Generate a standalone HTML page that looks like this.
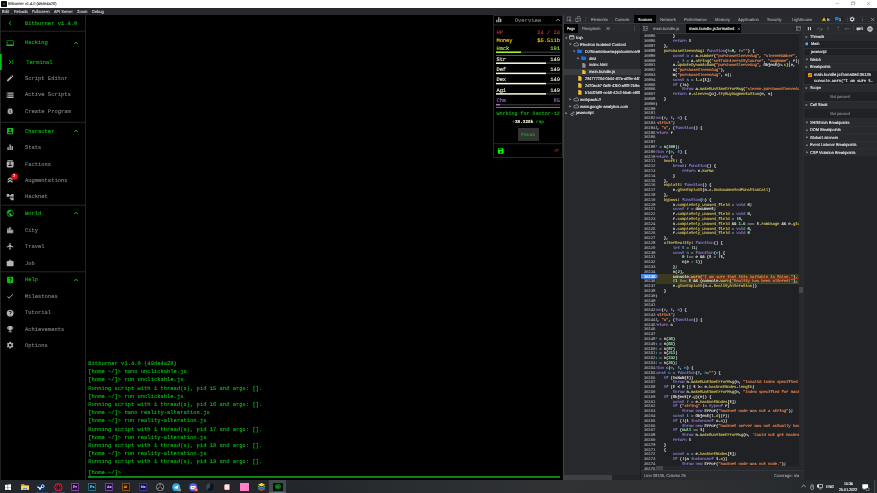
<!DOCTYPE html>
<html lang="en"><head><meta charset="utf-8"><title>Bitburner v1.4.0 (49de4a28)</title>
<style>
html,body{margin:0;padding:0;background:#000;overflow:hidden}
#root{will-change:transform;text-rendering:geometricPrecision;position:relative;width:877px;height:493px;overflow:hidden;background:#000;font-family:"Liberation Sans","DejaVu Sans",sans-serif}
#root div,#root svg{position:absolute;box-sizing:border-box}
#root .t{white-space:pre;line-height:8px}
#root span{white-space:pre}
.m{font-family:"Liberation Mono","DejaVu Sans Mono",monospace;-webkit-text-stroke:0.1px}
.s{font-family:"Liberation Sans","DejaVu Sans",sans-serif;-webkit-text-stroke:0.11px}
.b{font-weight:bold}
.i{font-style:italic}

</style></head><body><div id="root">
<div style="left:0px;top:0px;width:877px;height:8px;background:#ffffff;"></div>
<div style="left:1.3px;top:1.3px;width:5.3px;height:5.4px;background:#0c100c;border-radius:0.4px"></div>
<div style="left:2.6px;top:2.8px;width:2.8px;height:2.6px;background:#0a5a0a;"></div>
<div class="t s" style="left:8.3px;top:0px;font-size:4.0px;color:#3a3a3a;transform:scaleX(0.9737);transform-origin:0 50%;">Bitburner v1.4.0 (49de4a28)</div>
<svg style="left:834px;top:0px;" width="40" height="8" viewBox="0 0 40 8"><path d="M1.7 3.6h3.4" stroke="#777" stroke-width=".4" fill="none"/><rect x="17.6" y="2.3" width="2.6" height="2.6" stroke="#777" stroke-width=".4" fill="none"/><path d="M18.3 2.3v-.6h2.6v2.6h-.7" stroke="#777" stroke-width=".35" fill="none"/><path d="M33 2l3.2 3.2M36.2 2L33 5.2" stroke="#666" stroke-width=".45" fill="none"/></svg>
<div style="left:0px;top:8px;width:877px;height:6.6px;background:#28292c;"></div>
<div class="t s" style="left:1.9px;top:8px;font-size:4.3px;color:#d8d8d8;transform:scaleX(0.9582);transform-origin:0 50%;">Edit</div>
<div class="t s" style="left:13.6px;top:8px;font-size:4.3px;color:#d8d8d8;transform:scaleX(0.8747);transform-origin:0 50%;">Reloads</div>
<div class="t s" style="left:32px;top:8px;font-size:4.3px;color:#d8d8d8;transform:scaleX(0.8923);transform-origin:0 50%;">Fullscreen</div>
<div class="t s" style="left:54px;top:8px;font-size:4.3px;color:#d8d8d8;transform:scaleX(0.8994);transform-origin:0 50%;">API Server</div>
<div class="t s" style="left:77px;top:8px;font-size:4.3px;color:#d8d8d8;transform:scaleX(0.9462);transform-origin:0 50%;">Zoom</div>
<div class="t s" style="left:92px;top:8px;font-size:4.3px;color:#d8d8d8;transform:scaleX(0.9312);transform-origin:0 50%;">Debug</div>
<div style="left:0px;top:14.6px;width:563.0px;height:465.2px;background:#000;"></div>
<div style="left:0px;top:14.6px;width:1px;height:465.2px;background:#222222;"></div>
<div style="left:85px;top:14.6px;width:1px;height:465.2px;background:#222222;"></div>
<svg style="left:5.65px;top:18.85px;" width="8.3" height="8.3" viewBox="0 0 24 24"><path d="M15.41 7.41L14 6l-6 6 6 6 1.41-1.41L10.830 12z" fill="#0cc016"/></svg>
<div class="t m" style="left:24.9px;top:20px;font-size:5.48px;color:#0cc016;">Bitburner v1.4.0</div>
<div style="left:0px;top:30px;width:85px;height:1px;background:rgba(38,38,38,0.30);"></div>
<div style="left:0px;top:31px;width:85px;height:1px;background:rgba(38,38,38,0.70);"></div>
<div style="left:0px;top:121px;width:85px;height:1px;background:rgba(38,38,38,0.30);"></div>
<div style="left:0px;top:122px;width:85px;height:1px;background:rgba(38,38,38,0.70);"></div>
<div style="left:0px;top:204px;width:85px;height:1px;background:rgba(38,38,38,0.30);"></div>
<div style="left:0px;top:205px;width:85px;height:1px;background:rgba(38,38,38,0.70);"></div>
<div style="left:0px;top:271px;width:85px;height:1px;background:rgba(38,38,38,0.70);"></div>
<div style="left:0px;top:272px;width:85px;height:1px;background:rgba(38,38,38,0.30);"></div>
<svg style="left:5.85px;top:38.65px;" width="8.3" height="8.3" viewBox="0 0 24 24"><path d="M20 18c1.1 0 1.99-.9 1.99-2L22 6c0-1.1-.9-2-2-2H4c-1.1 0-2 .9-2 2v10c0 1.1.9 2 2 2H0v2h24v-2h-4zM4 6h16v10H4V6z" fill="#0cc016"/></svg>
<div class="t m" style="left:24.9px;top:39px;font-size:5.48px;color:#0cc016;">Hacking</div>
<svg style="left:71.85px;top:38.65px;" width="8.3" height="8.3" viewBox="0 0 24 24"><path d="M12 8l-6 6 1.41 1.41L12 10.83l4.59 4.58L18 14z" fill="#0cc016"/></svg>
<div style="left:0px;top:54px;width:1px;height:16px;background:rgba(12,192,22,1.00);"></div>
<div style="left:1px;top:54px;width:1px;height:16px;background:rgba(12,192,22,0.75);"></div>
<svg style="left:7.05px;top:57.85px;" width="8.3" height="8.3" viewBox="0 0 24 24"><path d="M5.59 7.41L10.18 12l-4.59 4.59L7 18l6-6-6-6zM16 6h2v12h-2z" fill="#0cc016"/></svg>
<div class="t m" style="left:26.3px;top:59px;font-size:5.48px;color:#0cc016;">Terminal</div>
<svg style="left:5.85px;top:74.25px;" width="8.3" height="8.3" viewBox="0 0 24 24"><path d="M3 17.25V21h3.75L17.81 9.94l-3.75-3.75L3 17.25zM20.71 7.04c.39-.39.39-1.02 0-1.41l-2.34-2.34c-.39-.39-1.02-.39-1.41 0l-1.83 1.83 3.75 3.75 1.83-1.83z" fill="#b4b4b4"/></svg>
<div class="t m" style="left:24.9px;top:75px;font-size:5.48px;color:#828282;">Script Editor</div>
<svg style="left:5.85px;top:90.65px;" width="8.3" height="8.3" viewBox="0 0 24 24"><path d="M2 20h20v-4H2v4zm2-3h2v2H4v-2zM2 4v4h20V4H2zm4 3H4V5h2v2zm-4 7h20v-4H2v4zm2-3h2v2H4v-2z" fill="#b4b4b4"/></svg>
<div class="t m" style="left:24.9px;top:91px;font-size:5.48px;color:#828282;">Active Scripts</div>
<svg style="left:5.85px;top:107.15px;" width="8.3" height="8.3" viewBox="0 0 24 24"><path d="M20 8h-2.81c-.45-.78-1.07-1.45-1.82-1.96L17 4.41 15.59 3l-2.17 2.17C12.96 5.06 12.49 5 12 5c-.49 0-.96.06-1.41.17L8.41 3 7 4.41l1.62 1.63C7.88 6.55 7.26 7.22 6.81 8H4v2h2.09c-.05.33-.09.66-.09 1v1H4v2h2v1c0 .34.04.67.09 1H4v2h2.81c1.04 1.79 2.97 3 5.19 3s4.15-1.21 5.19-3H20v-2h-2.09c.05-.33.09-.66.09-1v-1h2v-2h-2v-1c0-.34-.04-.67-.09-1H20V8zm-6 8h-4v-2h4v2zm0-4h-4v-2h4v2z" fill="#b4b4b4"/></svg>
<div class="t m" style="left:24.9px;top:108px;font-size:5.48px;color:#828282;">Create Program</div>
<svg style="left:5.85px;top:126.85px;" width="8.3" height="8.3" viewBox="0 0 24 24"><path d="M3 5v14c0 1.1.89 2 2 2h14c1.1 0 2-.9 2-2V5c0-1.1-.9-2-2-2H5c-1.11 0-2 .9-2 2zm12 4c0 1.66-1.34 3-3 3s-3-1.34-3-3 1.34-3 3-3 3 1.34 3 3zm-9 8c0-2 4-3.1 6-3.1s6 1.1 6 3.1v1H6v-1z" fill="#0cc016"/></svg>
<div class="t m" style="left:24.9px;top:128px;font-size:5.48px;color:#0cc016;">Character</div>
<svg style="left:71.85px;top:126.85px;" width="8.3" height="8.3" viewBox="0 0 24 24"><path d="M12 8l-6 6 1.41 1.41L12 10.83l4.59 4.58L18 14z" fill="#0cc016"/></svg>
<svg style="left:5.85px;top:143.35px;" width="8.3" height="8.3" viewBox="0 0 24 24"><path d="M10 20h4V4h-4v16zm-6 0h4v-8H4v8zM16 9v11h4V9h-4z" fill="#b4b4b4"/></svg>
<div class="t m" style="left:24.9px;top:144px;font-size:5.48px;color:#828282;">Stats</div>
<svg style="left:5.85px;top:159.75px;" width="8.3" height="8.3" viewBox="0 0 24 24"><path d="M20 0H4v2h16V0zM4 24h16v-2H4v2zM20 4H4c-1.1 0-2 .9-2 2v12c0 1.1.9 2 2 2h16c1.1 0 2-.9 2-2V6c0-1.1-.9-2-2-2zm-8 2.75c1.24 0 2.25 1.01 2.25 2.25s-1.01 2.25-2.25 2.25S9.75 10.24 9.75 9 10.76 6.75 12 6.75zM17 17H7v-1.5c0-1.67 3.33-2.5 5-2.5s5 .83 5 2.5V17z" fill="#b4b4b4"/></svg>
<div class="t m" style="left:24.9px;top:161px;font-size:5.48px;color:#828282;">Factions</div>
<svg style="left:5.85px;top:176.25px;" width="8.3" height="8.3" viewBox="0 0 24 24"><path d="M5 8.5V13l7-5 7 5V8.5l-7-5zM5 15.5V20l7-5 7 5v-4.500l-7-5z" fill="#b4b4b4"/></svg>
<div class="t m" style="left:24.9px;top:177px;font-size:5.48px;color:#828282;">Augmentations</div>
<svg style="left:5.85px;top:192.65px;" width="8.3" height="8.3" viewBox="0 0 24 24"><path d="M22 11V3h-7v3H9V3H2v8h7V8h2v10h4v3h7v-8h-7v3h-2V8h2v3z" fill="#b4b4b4"/></svg>
<div class="t m" style="left:24.9px;top:193px;font-size:5.48px;color:#828282;">Hacknet</div>
<svg style="left:5.85px;top:209.35px;" width="8.3" height="8.3" viewBox="0 0 24 24"><path d="M12 2C6.48 2 2 6.48 2 12s4.48 10 10 10 10-4.48 10-10S17.52 2 12 2zm-1 17.93c-3.95-.49-7-3.85-7-7.93 0-.62.08-1.21.21-1.79L9 15v1c0 1.1.9 2 2 2v1.93zm6.9-2.54c-.26-.81-1-1.39-1.9-1.39h-1v-3c0-.55-.45-1-1-1H8v-2h2c.55 0 1-.45 1-1V7h2c1.1 0 2-.9 2-2v-.41c2.93 1.19 5 4.06 5 7.41 0 2.08-.8 3.97-2.1 5.39z" fill="#0cc016"/></svg>
<div class="t m" style="left:24.9px;top:210px;font-size:5.48px;color:#0cc016;">World</div>
<svg style="left:71.85px;top:209.35px;" width="8.3" height="8.3" viewBox="0 0 24 24"><path d="M12 8l-6 6 1.41 1.41L12 10.83l4.59 4.58L18 14z" fill="#0cc016"/></svg>
<svg style="left:5.85px;top:225.95px;" width="8.3" height="8.3" viewBox="0 0 24 24"><path d="M15 11V5l-3-3-3 3v2H3v14h18V11h-6zm-8 8H5v-2h2v2zm0-4H5v-2h2v2zm0-4H5V9h2v2zm6 8h-2v-2h2v2zm0-4h-2v-2h2v2zm0-4h-2V9h2v2zm0-4h-2V5h2v2zm6 12h-2v-2h2v2zm0-4h-2v-2h2v2z" fill="#b4b4b4"/></svg>
<div class="t m" style="left:24.9px;top:227px;font-size:5.48px;color:#828282;">City</div>
<svg style="left:5.85px;top:242.45px;" width="8.3" height="8.3" viewBox="0 0 24 24"><path d="M21 16v-2l-8-5V3.5c0-.83-.67-1.5-1.5-1.5S10 2.67 10 3.5V9l-8 5v2l8-2.5V19l-2 1.5V22l3.5-1 3.5 1v-1.5L13 19v-5.5l8 2.5z" fill="#b4b4b4"/></svg>
<div class="t m" style="left:24.9px;top:243px;font-size:5.48px;color:#828282;">Travel</div>
<svg style="left:5.85px;top:258.85px;" width="8.3" height="8.3" viewBox="0 0 24 24"><path d="M20 6h-4V4c0-1.11-.89-2-2-2h-4c-1.11 0-2 .89-2 2v2H4c-1.11 0-1.99.89-1.99 2L2 19c0 1.11.89 2 2 2h16c1.11 0 2-.89 2-2V8c0-1.11-.89-2-2-2zm-6 0h-4V4h4v2z" fill="#b4b4b4"/></svg>
<div class="t m" style="left:24.9px;top:260px;font-size:5.48px;color:#828282;">Job</div>
<svg style="left:5.85px;top:275.55px;" width="8.3" height="8.3" viewBox="0 0 24 24"><path d="M19 2H5c-1.11 0-2 .9-2 2v14c0 1.1.89 2 2 2h4l3 3 3-3h4c1.1 0 2-.9 2-2V4c0-1.1-.9-2-2-2zm-6 16h-2v-2h2v2zm2.07-7.75l-.9.92C13.45 11.9 13 12.5 13 14h-2v-.5c0-1.1.45-2.1 1.17-2.83l1.24-1.26c.37-.36.59-.86.59-1.41 0-1.1-.9-2-2-2s-2 .9-2 2H8c0-2.21 1.79-4 4-4s4 1.79 4 4c0 .88-.36 1.68-.93 2.25z" fill="#0cc016"/></svg>
<div class="t m" style="left:24.9px;top:276px;font-size:5.48px;color:#0cc016;">Help</div>
<svg style="left:71.85px;top:275.55px;" width="8.3" height="8.3" viewBox="0 0 24 24"><path d="M12 8l-6 6 1.41 1.41L12 10.83l4.59 4.58L18 14z" fill="#0cc016"/></svg>
<svg style="left:5.85px;top:292.05px;" width="8.3" height="8.3" viewBox="0 0 24 24"><path d="M9 16.17L4.83 12l-1.42 1.41L9 19 21 7l-1.41-1.41z" fill="#b4b4b4"/></svg>
<div class="t m" style="left:24.9px;top:293px;font-size:5.48px;color:#828282;">Milestones</div>
<svg style="left:5.85px;top:308.55px;" width="8.3" height="8.3" viewBox="0 0 24 24"><path d="M12 2C6.48 2 2 6.48 2 12s4.48 10 10 10 10-4.48 10-10S17.52 2 12 2zm1 17h-2v-2h2v2zm2.07-7.75l-.9.92C13.45 12.9 13 13.5 13 15h-2v-.5c0-1.1.45-2.1 1.17-2.83l1.24-1.26c.37-.36.59-.86.59-1.41 0-1.1-.9-2-2-2s-2 .9-2 2H8c0-2.21 1.79-4 4-4s4 1.79 4 4c0 .88-.36 1.68-.93 2.25z" fill="#b4b4b4"/></svg>
<div class="t m" style="left:24.9px;top:309px;font-size:5.48px;color:#828282;">Tutorial</div>
<svg style="left:5.85px;top:324.95px;" width="8.3" height="8.3" viewBox="0 0 24 24"><path d="M19 5h-2V3H7v2H5c-1.1 0-2 .9-2 2v1c0 2.55 1.92 4.63 4.39 4.94.63 1.5 1.98 2.63 3.61 2.96V19H7v2h10v-2h-4v-3.1c1.63-.33 2.98-1.46 3.61-2.96C19.08 12.63 21 10.55 21 8V7c0-1.1-.9-2-2-2zM5 8V7h2v3.820C5.84 10.4 5 9.3 5 8zm14 0c0 1.3-.84 2.4-2 2.820V7h2v1z" fill="#b4b4b4"/></svg>
<div class="t m" style="left:24.9px;top:326px;font-size:5.48px;color:#828282;">Achievements</div>
<svg style="left:5.85px;top:341.45px;" width="8.3" height="8.3" viewBox="0 0 24 24"><path d="M19.14 12.94c.04-.3.06-.61.06-.94 0-.32-.02-.64-.07-.94l2.03-1.580c.18-.14.23-.41.12-.61l-1.920-3.320c-.12-.22-.37-.29-.59-.22l-2.390.960c-.5-.38-1.030-.7-1.620-.94l-.36-2.540c-.04-.24-.24-.41-.48-.41h-3.840c-.24 0-.43.17-.47.41l-.36 2.540c-.59.24-1.130.57-1.620.94l-2.390-.960c-.22-.08-.47 0-.59.22L2.740 8.870c-.12.21-.08.47.12.61l2.030 1.580c-.05.3-.09.63-.09.94s.02.64.07.94l-2.030 1.580c-.18.14-.23.41-.12.61l1.920 3.320c.12.22.37.29.59.22l2.390-.960c.5.38 1.030.7 1.620.94l.36 2.540c.05.24.24.41.48.41h3.840c.24 0 .44-.17.47-.41l.36-2.540c.59-.24 1.130-.56 1.620-.94l2.390.960c.22.08.47 0 .59-.22l1.920-3.320c.12-.22.07-.47-.12-.61l-2.010-1.580zM12 15.6c-1.980 0-3.600-1.620-3.600-3.600s1.620-3.600 3.600-3.600 3.600 1.620 3.600 3.600-1.620 3.600-3.600 3.600z" fill="#b4b4b4"/></svg>
<div class="t m" style="left:24.9px;top:342px;font-size:5.48px;color:#828282;">Options</div>
<svg style="left:10.7px;top:172.8px;" width="7" height="7" viewBox="0 0 7 7"><circle cx="3.500" cy="3.500" r="3.300" fill="#e01414"/></svg>
<div class="t m" style="left:12.9px;top:173px;font-size:3.6px;color:#fff;">7</div>
<div class="t m" style="left:88.3px;top:360px;font-size:5.48px;color:#0cc016;">Bitburner v1.4.0 (49de4a28)</div>
<div class="t m" style="left:88.3px;top:368px;font-size:5.48px;color:#0cc016;">[home ~/]&gt; nano unclickable.js</div>
<div class="t m" style="left:88.3px;top:376px;font-size:5.48px;color:#0cc016;">[home ~/]&gt; run unclickable.js</div>
<div class="t m" style="left:88.3px;top:385px;font-size:5.48px;color:#0cc016;">Running script with 1 thread(s), pid 15 and args: [].</div>
<div class="t m" style="left:88.3px;top:393px;font-size:5.48px;color:#0cc016;">[home ~/]&gt; run unclickable.js</div>
<div class="t m" style="left:88.3px;top:401px;font-size:5.48px;color:#0cc016;">Running script with 1 thread(s), pid 16 and args: [].</div>
<div class="t m" style="left:88.3px;top:409px;font-size:5.48px;color:#0cc016;">[home ~/]&gt; nano reality-alteration.js</div>
<div class="t m" style="left:88.3px;top:417px;font-size:5.48px;color:#0cc016;">[home ~/]&gt; run reality-alteration.js</div>
<div class="t m" style="left:88.3px;top:426px;font-size:5.48px;color:#0cc016;">Running script with 1 thread(s), pid 17 and args: [].</div>
<div class="t m" style="left:88.3px;top:434px;font-size:5.48px;color:#0cc016;">[home ~/]&gt; run reality-alteration.js</div>
<div class="t m" style="left:88.3px;top:442px;font-size:5.48px;color:#0cc016;">Running script with 1 thread(s), pid 18 and args: [].</div>
<div class="t m" style="left:88.3px;top:450px;font-size:5.48px;color:#0cc016;">[home ~/]&gt; run reality-alteration.js</div>
<div class="t m" style="left:88.3px;top:458px;font-size:5.48px;color:#0cc016;">Running script with 1 thread(s), pid 19 and args: [].</div>
<div class="t m" style="left:88.3px;top:469px;font-size:5.48px;color:#0cc016;">[home ~/]&gt;</div>
<div style="left:88px;top:476px;width:472.4px;height:1px;background:rgba(14,154,30,0.90);"></div>
<div style="left:88px;top:477px;width:472.4px;height:1px;background:rgba(14,154,30,0.80);"></div>
<div style="left:493.0px;top:15px;width:70.20000000000005px;height:142.6px;background:#000;border:1px solid #262626"></div>
<div style="left:493.0px;top:24px;width:70.20000000000005px;height:1px;background:rgba(38,38,38,0.50);"></div>
<div style="left:493.0px;top:25px;width:70.20000000000005px;height:1px;background:rgba(38,38,38,0.50);"></div>
<svg style="left:494.8px;top:16.2px;" width="7.6" height="7.6" viewBox="0 0 24 24"><path d="M10 20h4V4h-4v16zm-6 0h4v-8H4v8zM16 9v11h4V9h-4z" fill="#b4b4b4"/></svg>
<div class="t m" style="left:514.8px;top:17px;font-size:5.48px;color:#828282;">Overview</div>
<svg style="left:553.8px;top:16.0px;" width="8" height="8" viewBox="0 0 24 24"><path d="M12 8l-6 6 1.41 1.41L12 10.83l4.59 4.58L18 14z" fill="#b4b4b4"/></svg>
<div class="t m" style="left:496.4px;top:29px;font-size:5.4px;color:#cf3636;">HP</div>
<div class="t m" style="right:317.0px;top:29px;font-size:5.4px;color:#cf3636;">24 / 24</div>
<div class="t m" style="left:496.4px;top:37px;font-size:5.4px;color:#ffd700;">Money</div>
<div class="t m" style="right:317.0px;top:37px;font-size:5.4px;color:#ffd700;">$5.511b</div>
<div class="t m" style="left:496.4px;top:45px;font-size:5.4px;color:#adff2f;">Hack</div>
<div class="t m" style="right:317.0px;top:45px;font-size:5.4px;color:#adff2f;">191</div>
<div style="left:521.0132px;top:51px;width:38.98680000000002px;height:1px;background:rgba(46,46,46,0.55);"></div>
<div style="left:521.0132px;top:52px;width:38.98680000000002px;height:1px;background:rgba(46,46,46,0.95);"></div>
<div style="left:496.4px;top:51px;width:24.61320000000001px;height:1px;background:rgba(173,255,47,0.55);"></div>
<div style="left:496.4px;top:52px;width:24.61320000000001px;height:1px;background:rgba(173,255,47,0.95);"></div>
<div style="left:496.4px;top:55px;width:63.60000000000002px;height:1px;background:rgba(85,85,85,1.00);"></div>
<div class="t m" style="left:496.4px;top:56px;font-size:5.4px;color:#faffdf;">Str</div>
<div class="t m" style="right:317.0px;top:56px;font-size:5.4px;color:#faffdf;">149</div>
<div style="left:545.6264px;top:62px;width:14.373600000000003px;height:1px;background:rgba(46,46,46,0.55);"></div>
<div style="left:545.6264px;top:63px;width:14.373600000000003px;height:1px;background:rgba(46,46,46,0.95);"></div>
<div style="left:496.4px;top:62px;width:49.22640000000002px;height:1px;background:rgba(250,255,223,0.55);"></div>
<div style="left:496.4px;top:63px;width:49.22640000000002px;height:1px;background:rgba(250,255,223,0.95);"></div>
<div class="t m" style="left:496.4px;top:66px;font-size:5.4px;color:#faffdf;">Def</div>
<div class="t m" style="right:317.0px;top:66px;font-size:5.4px;color:#faffdf;">149</div>
<div style="left:545.6264px;top:72px;width:14.373600000000003px;height:1px;background:rgba(46,46,46,0.35);"></div>
<div style="left:545.6264px;top:73px;width:14.373600000000003px;height:1px;background:rgba(46,46,46,1.00);"></div>
<div style="left:545.6264px;top:74px;width:14.373600000000003px;height:1px;background:rgba(46,46,46,0.15);"></div>
<div style="left:496.4px;top:72px;width:49.22640000000002px;height:1px;background:rgba(250,255,223,0.35);"></div>
<div style="left:496.4px;top:73px;width:49.22640000000002px;height:1px;background:rgba(250,255,223,1.00);"></div>
<div style="left:496.4px;top:74px;width:49.22640000000002px;height:1px;background:rgba(250,255,223,0.15);"></div>
<div class="t m" style="left:496.4px;top:76px;font-size:5.4px;color:#faffdf;">Dex</div>
<div class="t m" style="right:317.0px;top:76px;font-size:5.4px;color:#faffdf;">149</div>
<div style="left:545.6264px;top:82px;width:14.373600000000003px;height:1px;background:rgba(46,46,46,0.15);"></div>
<div style="left:545.6264px;top:83px;width:14.373600000000003px;height:1px;background:rgba(46,46,46,1.00);"></div>
<div style="left:545.6264px;top:84px;width:14.373600000000003px;height:1px;background:rgba(46,46,46,0.35);"></div>
<div style="left:496.4px;top:82px;width:49.22640000000002px;height:1px;background:rgba(250,255,223,0.15);"></div>
<div style="left:496.4px;top:83px;width:49.22640000000002px;height:1px;background:rgba(250,255,223,1.00);"></div>
<div style="left:496.4px;top:84px;width:49.22640000000002px;height:1px;background:rgba(250,255,223,0.35);"></div>
<div class="t m" style="left:496.4px;top:87px;font-size:5.4px;color:#faffdf;">Agi</div>
<div class="t m" style="right:317.0px;top:87px;font-size:5.4px;color:#faffdf;">149</div>
<div style="left:545.6264px;top:93px;width:14.373600000000003px;height:1px;background:rgba(46,46,46,0.85);"></div>
<div style="left:545.6264px;top:94px;width:14.373600000000003px;height:1px;background:rgba(46,46,46,0.65);"></div>
<div style="left:496.4px;top:93px;width:49.22640000000002px;height:1px;background:rgba(250,255,223,0.85);"></div>
<div style="left:496.4px;top:94px;width:49.22640000000002px;height:1px;background:rgba(250,255,223,0.65);"></div>
<div class="t m" style="left:496.4px;top:97px;font-size:5.4px;color:#a671d1;">Cha</div>
<div class="t m" style="right:317.0px;top:97px;font-size:5.4px;color:#a671d1;">85</div>
<div style="left:500.21599999999995px;top:103px;width:59.78400000000002px;height:1px;background:rgba(46,46,46,0.05);"></div>
<div style="left:500.21599999999995px;top:104px;width:59.78400000000002px;height:1px;background:rgba(46,46,46,1.00);"></div>
<div style="left:500.21599999999995px;top:105px;width:59.78400000000002px;height:1px;background:rgba(46,46,46,0.45);"></div>
<div style="left:496.4px;top:103px;width:3.816000000000001px;height:1px;background:rgba(166,113,209,0.05);"></div>
<div style="left:496.4px;top:104px;width:3.816000000000001px;height:1px;background:rgba(166,113,209,1.00);"></div>
<div style="left:496.4px;top:105px;width:3.816000000000001px;height:1px;background:rgba(166,113,209,0.45);"></div>
<div style="left:496.4px;top:106px;width:63.60000000000002px;height:1px;background:rgba(112,112,112,0.10);"></div>
<div style="left:496.4px;top:107px;width:63.60000000000002px;height:1px;background:rgba(112,112,112,1.00);"></div>
<div class="t m" style="left:496.4px;top:110px;font-size:5.04px;color:#0cc016;">Working for Sector-12</div>
<div class="t m" style="left:512.3px;top:119px;font-size:4.4px;color:#0cc016;">+<span style="color:#faffdf;font-weight:bold">38.328k</span> rep</div>
<div style="left:517.7px;top:128.2px;width:21.7px;height:12.5px;background:#333;"></div>
<div class="t m" style="left:521.3px;top:132px;font-size:4.6px;color:#0cc016;">Focus</div>
<div style="left:493.0px;top:143px;width:70.20000000000005px;height:1px;background:rgba(38,38,38,0.80);"></div>
<div style="left:493.0px;top:144px;width:70.20000000000005px;height:1px;background:rgba(38,38,38,0.20);"></div>
<svg style="left:496.9px;top:146.8px;" width="7.6" height="7.6" viewBox="0 0 24 24"><path d="M17 3H5c-1.11 0-2 .9-2 2v14c0 1.1.89 2 2 2h14c1.1 0 2-.9 2-2V7l-4-4zm-5 16c-1.66 0-3-1.34-3-3s1.34-3 3-3 3 1.34 3 3-1.34 3-3 3zm3-10H5V5h10v4z" fill="#00ff00"/></svg>
<svg style="left:552.5px;top:147.1px;" width="7" height="7" viewBox="0 0 24 24"><path d="M5 13h14v-2H5v2zm-2 4h14v-2H3v2zM7 7v2h14V7H7z" fill="#cc0000"/></svg>
<div style="left:563.0px;top:14.6px;width:314.0px;height:465.2px;background:#202124;"></div>
<div style="left:563.0px;top:14.6px;width:314.0px;height:9.0px;background:#292a2d;"></div>
<div style="left:563.0px;top:23.3px;width:314.0px;height:0.7px;background:#35373b;"></div>
<div style="left:563.0px;top:24.0px;width:314.0px;height:9.0px;background:#292a2d;"></div>
<div style="left:563.0px;top:32.7px;width:314.0px;height:0.7px;background:#35373b;"></div>
<div style="left:563.0px;top:33.4px;width:77.39999999999998px;height:446.4px;background:#28292c;"></div>
<div style="left:563.0px;top:474.8px;width:77.39999999999998px;height:5.0px;background:#232427;"></div>
<div style="left:563.4px;top:475.2px;width:48.2px;height:4.4px;background:#3f4043;"></div>
<div style="left:562px;top:14.6px;width:1px;height:465.2px;background:rgba(64,66,70,0.10);"></div>
<div style="left:563px;top:14.6px;width:1px;height:465.2px;background:rgba(64,66,70,0.90);"></div>
<svg style="left:566px;top:15.8px;" width="6.4" height="6.4" viewBox="0 0 22 22"><path d="M3 3h14v6h-1.6V4.6H4.6v10.800H9V17H3z" fill="#9aa0a6"/><path d="M10 10l9 3.400-3.600 1.400 3.400 3.400-1.400 1.400-3.400-3.400L12.600 20z" fill="#9aa0a6"/></svg>
<svg style="left:575px;top:15.8px;" width="6.4" height="6.4" viewBox="0 0 22 22"><path d="M7 2h11v3h-1.500V3.500h-8V6H7z M2 7h9v13H2z M3.500 9v8.500h6V9z M12.500 7H20v11h-7.500v-1.500H18.500v-8H12.500z" fill="#9aa0a6" fill-rule="evenodd"/></svg>
<div style="left:584px;top:16.6px;width:1px;height:5px;background:rgba(69,72,76,0.10);"></div>
<div style="left:585px;top:16.6px;width:1px;height:5px;background:rgba(69,72,76,0.50);"></div>
<div style="left:634.3px;top:14.6px;width:21.9px;height:8.8px;background:#000;"></div>
<div class="t s" style="left:591px;top:16px;font-size:4.2px;color:#9aa0a6;transform:scaleX(0.9596);transform-origin:0 50%;">Elements</div>
<div class="t s" style="left:615.3px;top:16px;font-size:4.2px;color:#9aa0a6;transform:scaleX(0.9474);transform-origin:0 50%;">Console</div>
<div class="t s" style="left:638.1px;top:16px;font-size:4.2px;color:#e8eaed;transform:scaleX(0.9151);transform-origin:0 50%;">Sources</div>
<div class="t s" style="left:660px;top:16px;font-size:4.2px;color:#9aa0a6;transform:scaleX(1.0322);transform-origin:0 50%;">Network</div>
<div class="t s" style="left:684.1px;top:16px;font-size:4.2px;color:#9aa0a6;transform:scaleX(0.9482);transform-origin:0 50%;">Performance</div>
<div class="t s" style="left:714.7px;top:16px;font-size:4.2px;color:#9aa0a6;transform:scaleX(0.9955);transform-origin:0 50%;">Memory</div>
<div class="t s" style="left:738px;top:16px;font-size:4.2px;color:#9aa0a6;transform:scaleX(1.022);transform-origin:0 50%;">Application</div>
<div class="t s" style="left:766.6px;top:16px;font-size:4.2px;color:#9aa0a6;transform:scaleX(0.9623);transform-origin:0 50%;">Security</div>
<div class="t s" style="left:792.4px;top:16px;font-size:4.2px;color:#9aa0a6;transform:scaleX(0.9926);transform-origin:0 50%;">Lighthouse</div>
<svg style="left:820.9px;top:16.2px;" width="10.2" height="5.8" viewBox="0 0 10.2 5.8"><rect x=".3" y=".3" width="9.600" height="5.200" rx="1" fill="#1f2023" stroke="#3c3f43" stroke-width=".5"/><path d="M3 1.200L5.100 4.700H.9z" fill="#f2bb13"/></svg>
<div class="t s" style="left:826.8px;top:16px;font-size:4.4px;color:#e8eaed;transform:scaleX(1.0216);transform-origin:0 50%;">5</div>
<svg style="left:832.6px;top:16.2px;" width="10.8" height="5.8" viewBox="0 0 10.8 5.8"><rect x=".3" y=".3" width="10.200" height="5.200" rx="1" fill="#1f2023" stroke="#3c3f43" stroke-width=".5"/><path d="M1.900 1h3.800v3.300H3.600L2.700 5.200V4.300H1.900z" fill="#1a73e8"/></svg>
<div class="t s" style="left:839.3px;top:16px;font-size:4.4px;color:#e8eaed;transform:scaleX(0.8581);transform-origin:0 50%;">1</div>
<div style="left:846px;top:16.6px;width:1px;height:5px;background:rgba(69,72,76,0.10);"></div>
<div style="left:847px;top:16.6px;width:1px;height:5px;background:rgba(69,72,76,0.50);"></div>
<svg style="left:849.45px;top:16.15px;" width="6.3" height="6.3" viewBox="0 0 24 24"><path d="M19.14 12.94c.04-.3.06-.61.06-.94 0-.32-.02-.64-.07-.94l2.03-1.580c.18-.14.23-.41.12-.61l-1.920-3.320c-.12-.22-.37-.29-.59-.22l-2.390.960c-.5-.38-1.030-.7-1.620-.94l-.36-2.540c-.04-.24-.24-.41-.48-.41h-3.840c-.24 0-.43.17-.47.41l-.36 2.540c-.59.24-1.130.57-1.620.94l-2.390-.960c-.22-.08-.47 0-.59.22L2.740 8.870c-.12.21-.08.47.12.61l2.030 1.580c-.05.3-.09.63-.09.94s.02.64.07.94l-2.030 1.580c-.18.14-.23.41-.12.61l1.920 3.320c.12.22.37.29.59.22l2.390-.960c.5.38 1.030.7 1.620.94l.36 2.540c.05.24.24.41.48.41h3.840c.24 0 .44-.17.47-.41l.36-2.540c.59-.24 1.130-.56 1.620-.94l2.390.960c.22.08.47 0 .59-.22l1.920-3.320c.12-.22.07-.47-.12-.61l-2.010-1.580zM12 15.6c-1.980 0-3.600-1.620-3.600-3.600s1.620-3.600 3.600-3.600 3.600 1.620 3.600 3.600-1.620 3.600-3.600 3.600z" fill="#c8cbcf"/></svg>
<svg style="left:861.9px;top:16.8px;" width="1" height="1" viewBox="0 0 1 1"><circle cx=".5" cy=".5" r=".4" fill="#8e9398"/></svg>
<svg style="left:861.9px;top:18.55px;" width="1" height="1" viewBox="0 0 1 1"><circle cx=".5" cy=".5" r=".4" fill="#8e9398"/></svg>
<svg style="left:861.9px;top:20.3px;" width="1" height="1" viewBox="0 0 1 1"><circle cx=".5" cy=".5" r=".4" fill="#8e9398"/></svg>
<svg style="left:870.0px;top:16.7px;" width="5.2" height="5.2" viewBox="0 0 10 10"><path d="M1.800 1.800l6.400 6.400M8.200 1.800L1.800 8.200" stroke="#c4c7cb" stroke-width="1" fill="none"/></svg>
<div style="left:564px;top:24.3px;width:14.2px;height:8.4px;background:#000;"></div>
<div class="t s" style="left:567px;top:25px;font-size:4.2px;color:#e8eaed;transform:scaleX(0.8156);transform-origin:0 50%;">Page</div>
<div class="t s" style="left:581.9px;top:25px;font-size:4.2px;color:#9aa0a6;transform:scaleX(0.9268);transform-origin:0 50%;">Filesystem</div>
<div class="t s" style="left:606.4px;top:25px;font-size:6px;color:#9aa0a6;transform:scaleX(1.2586);transform-origin:0 50%;">»</div>
<svg style="left:634.0px;top:26.3px;" width="1" height="1" viewBox="0 0 1 1"><circle cx=".5" cy=".5" r=".4" fill="#8e9398"/></svg>
<svg style="left:634.0px;top:28.05px;" width="1" height="1" viewBox="0 0 1 1"><circle cx=".5" cy=".5" r=".4" fill="#8e9398"/></svg>
<svg style="left:634.0px;top:29.8px;" width="1" height="1" viewBox="0 0 1 1"><circle cx=".5" cy=".5" r=".4" fill="#8e9398"/></svg>
<div style="left:640px;top:24.0px;width:1px;height:455.8px;background:rgba(26,27,30,0.60);"></div>
<div style="left:641px;top:24.0px;width:1px;height:455.8px;background:rgba(26,27,30,0.50);"></div>
<svg style="left:643.3px;top:26.0px;" width="5.2" height="5.2" viewBox="0 0 12 12"><rect x="1" y="1" width="10" height="10" fill="none" stroke="#9aa0a6" stroke-width="1"/><path d="M4 1v10" stroke="#9aa0a6" stroke-width="1"/><path d="M9 4L6 6l3 2z" fill="#9aa0a6"/></svg>
<div class="t s" style="left:653px;top:25px;font-size:4.2px;color:#9aa0a6;transform:scaleX(0.9785);transform-origin:0 50%;">main.bundle.js</div>
<div style="left:686px;top:24.3px;width:54.7px;height:8.4px;background:#000;"></div>
<div class="t s" style="left:689.2px;top:25px;font-size:4.2px;color:#e8eaed;transform:scaleX(0.9893);transform-origin:0 50%;">main.bundle.js:formatted</div>
<svg style="left:736.6px;top:26.7px;" width="3.6" height="3.6" viewBox="0 0 10 10"><path d="M2 2l6 6M8 2L2 8" stroke="#e8eaed" stroke-width="1.300" fill="none"/></svg>
<svg style="left:795.7px;top:26.0px;" width="5.2" height="5.2" viewBox="0 0 12 12"><rect x="1" y="1" width="10" height="10" fill="none" stroke="#9aa0a6" stroke-width="1"/><path d="M1 3.500h10" stroke="#9aa0a6" stroke-width="1"/><path d="M3 5.500l2.500 1.800L3 9z" fill="#9aa0a6"/></svg>
<div style="left:803px;top:24.0px;width:1px;height:455.8px;background:rgba(52,54,58,0.60);"></div>
<div style="left:804px;top:24.0px;width:1px;height:455.8px;background:rgba(52,54,58,0.10);"></div>
<svg style="left:806.7px;top:26.0px;" width="5" height="5" viewBox="0 0 12 12"><path d="M2 2.300h2.600v7.600H2zM7 2.300h2.600v7.600H7z" fill="#c8cbcf"/></svg>
<svg style="left:815.5px;top:25.6px;" width="7" height="6" viewBox="0 0 14 12"><path d="M1.500 8C3 3.500 10.500 3 12 7.500" stroke="#6e7379" stroke-width="1.200" fill="none"/><circle cx="7" cy="9.500" r="1.200" fill="#6e7379"/><path d="M12.800 4.500v3.800H9z" fill="#6e7379"/></svg>
<svg style="left:826.2px;top:26.0px;" width="4.2" height="5" viewBox="0 0 10 12"><path d="M5 1v6M2.800 5L5 7.500 7.200 5" stroke="#6e7379" stroke-width="1.100" fill="none"/><circle cx="5" cy="10" r="1.100" fill="#6e7379"/></svg>
<svg style="left:835.7px;top:26.0px;" width="4.2" height="5" viewBox="0 0 10 12"><path d="M5 7.500v-6M2.800 3.500L5 1l2.200 2.500" stroke="#6e7379" stroke-width="1.100" fill="none"/><circle cx="5" cy="10" r="1.100" fill="#6e7379"/></svg>
<svg style="left:843.6px;top:25.8px;" width="7" height="5.6" viewBox="0 0 14 10"><path d="M2 5h8M7.500 2.500L10 5 7.500 7.500" stroke="#6e7379" stroke-width="1.100" fill="none" transform="matrix(-1 0 0 1 12 0)"/><circle cx="11.800" cy="5" r="1.100" fill="#6e7379"/></svg>
<div style="left:853px;top:25.8px;width:1px;height:5.4px;background:rgba(69,72,76,0.60);"></div>
<svg style="left:856.3px;top:25.8px;" width="7.4" height="5.6" viewBox="0 0 14 10"><path d="M1 2.500h6.500l2.500 2.500-2.500 2.500H1z" fill="#c4c7cb"/><path d="M2 9.500L12 .5" stroke="#c4c7cb" stroke-width="1.100"/><path d="M10.500 2.500h2.500v5h-2.500z" fill="#c4c7cb"/></svg>
<svg style="left:867.0px;top:25.6px;" width="6" height="6" viewBox="0 0 12 12"><path d="M4 .5h4L11.500 4v4L8 11.500H4L.5 8V4z" fill="#c4c7cb"/><path d="M4.300 3.500v5M7.700 3.500v5" stroke="#292a2d" stroke-width="1.300"/></svg>
<div style="left:563.0px;top:68.5px;width:77.5px;height:6.9px;background:#393b3f;"></div>
<svg style="left:565.1px;top:36.6px;" width="2.6" height="2.6" viewBox="0 0 10 10"><path d="M0 1.500h10L5 8.500z" fill="#9aa0a6"/></svg>
<svg style="left:569.3px;top:35.400000000000006px;" width="5.4" height="4.5" viewBox="0 0 20 16"><rect x="1.500" y="1.500" width="17" height="13" rx="1.500" fill="none" stroke="#dadde1" stroke-width="2.400"/><path d="M1.500 5.200h17" stroke="#dadde1" stroke-width="2.400"/></svg>
<div class="t s" style="left:576.4px;top:34px;font-size:4.2px;color:#e8eaed;transform:scaleX(1.1647);transform-origin:0 50%;">top</div>
<svg style="left:569.1px;top:43.46px;" width="2.6" height="2.6" viewBox="0 0 10 10"><path d="M0 1.500h10L5 8.500z" fill="#9aa0a6"/></svg>
<svg style="left:572.5px;top:42.06px;" width="6.4" height="5.0" viewBox="0 0 25 20"><path d="M6 15.500h13a3.600 3.600 0 0 0 .6-7.150A5.800 5.800 0 0 0 8.400 6.600 4.500 4.500 0 0 0 6 15.500z" fill="none" stroke="#dadde1" stroke-width="2.100"/></svg>
<div class="t s" style="left:580.4px;top:41px;font-size:4.2px;color:#e8eaed;transform:scaleX(0.9803);transform-origin:0 50%;">Electron Isolated Context</div>
<svg style="left:572.7px;top:50.32px;" width="2.6" height="2.6" viewBox="0 0 10 10"><path d="M0 1.500h10L5 8.500z" fill="#9aa0a6"/></svg>
<svg style="left:577.4px;top:49.32px;" width="5.2" height="4.2" viewBox="0 0 24 20"><path d="M1 1h7l2 2.500h13V19H1z" fill="#1a73e8"/></svg>
<div style="left:584.6px;top:47px;width:55.8px;height:8px;overflow:hidden">
<div class="t s" style="left:0.0px;top:1px;font-size:4.2px;color:#e8eaed;transform:scaleX(0.92);transform-origin:0 50%;">D:/Steam/steamapps/common/Bitburner/resources/app</div>
</div>
<svg style="left:576.9px;top:56.980000000000004px;" width="2.6" height="2.6" viewBox="0 0 10 10"><path d="M1.500 0v10L8.500 5z" fill="#9aa0a6"/></svg>
<svg style="left:581.4px;top:56.18px;" width="5.2" height="4.2" viewBox="0 0 24 20"><path d="M1 1h7l2 2.500h13V19H1z" fill="#1a73e8"/></svg>
<div class="t s" style="left:588.6px;top:55px;font-size:4.2px;color:#e8eaed;transform:scaleX(1.071);transform-origin:0 50%;">dist</div>
<svg style="left:582.1px;top:62.74px;" width="3.8" height="4.8" viewBox="0 0 16 20"><path d="M1 0h9l5 5v15H1z" fill="#8f9296"/><path d="M10 0v5h5z" fill="#00000055"/></svg>
<div class="t s" style="left:588.6px;top:61px;font-size:4.2px;color:#e8eaed;transform:scaleX(0.9612);transform-origin:0 50%;">index.html</div>
<svg style="left:582.1px;top:69.6px;" width="3.8" height="4.8" viewBox="0 0 16 20"><path d="M1 0h9l5 5v15H1z" fill="#f2c037"/><path d="M10 0v5h5z" fill="#00000055"/></svg>
<div class="t s" style="left:588.6px;top:68px;font-size:4.2px;color:#e8eaed;transform:scaleX(0.9674);transform-origin:0 50%;">main.bundle.js</div>
<svg style="left:577.9px;top:76.46000000000001px;" width="3.8" height="4.8" viewBox="0 0 16 20"><path d="M1 0h9l5 5v15H1z" fill="#f2c037"/><path d="M10 0v5h5z" fill="#00000055"/></svg>
<div style="left:584.6px;top:74px;width:55.8px;height:8px;overflow:hidden">
<div class="t s" style="left:0.0px;top:1px;font-size:4.2px;color:#e8eaed;transform:scaleX(0.92);transform-origin:0 50%;">28477720d-0b44-4f7a-a09e-d4f1c3a0b5e2</div>
</div>
<svg style="left:577.9px;top:83.32px;" width="3.8" height="4.8" viewBox="0 0 16 20"><path d="M1 0h9l5 5v15H1z" fill="#f2c037"/><path d="M10 0v5h5z" fill="#00000055"/></svg>
<div style="left:584.6px;top:81px;width:55.8px;height:8px;overflow:hidden">
<div class="t s" style="left:0.0px;top:1px;font-size:4.2px;color:#e8eaed;transform:scaleX(0.92);transform-origin:0 50%;">2d70acb7-0af5-43b0-a9f9-2b8e4d1c7a90</div>
</div>
<svg style="left:577.9px;top:90.18px;" width="3.8" height="4.8" viewBox="0 0 16 20"><path d="M1 0h9l5 5v15H1z" fill="#f2c037"/><path d="M10 0v5h5z" fill="#00000055"/></svg>
<div style="left:584.6px;top:88px;width:55.8px;height:8px;overflow:hidden">
<div class="t s" style="left:0.0px;top:1px;font-size:4.2px;color:#e8eaed;transform:scaleX(0.92);transform-origin:0 50%;">b1dd2b89-eeb6-42c3-bbab-e5f0a7d3c1b4</div>
</div>
<svg style="left:569.3px;top:98.14px;" width="2.6" height="2.6" viewBox="0 0 10 10"><path d="M1.500 0v10L8.500 5z" fill="#9aa0a6"/></svg>
<svg style="left:572.5px;top:96.94px;" width="6.4" height="5.0" viewBox="0 0 25 20"><path d="M6 15.500h13a3.600 3.600 0 0 0 .6-7.150A5.800 5.800 0 0 0 8.400 6.600 4.500 4.500 0 0 0 6 15.500z" fill="none" stroke="#dadde1" stroke-width="2.100"/></svg>
<div class="t s" style="left:580.4px;top:96px;font-size:4.2px;color:#e8eaed;transform:scaleX(1.046);transform-origin:0 50%;">webpack://</div>
<svg style="left:569.3px;top:105.00000000000001px;" width="2.6" height="2.6" viewBox="0 0 10 10"><path d="M1.500 0v10L8.500 5z" fill="#9aa0a6"/></svg>
<svg style="left:572.5px;top:103.80000000000001px;" width="6.4" height="5.0" viewBox="0 0 25 20"><path d="M6 15.500h13a3.600 3.600 0 0 0 .6-7.150A5.800 5.800 0 0 0 8.400 6.600 4.500 4.500 0 0 0 6 15.500z" fill="none" stroke="#dadde1" stroke-width="2.100"/></svg>
<div class="t s" style="left:580.4px;top:103px;font-size:4.2px;color:#e8eaed;transform:scaleX(0.978);transform-origin:0 50%;">www.google-analytics.com</div>
<svg style="left:565.3px;top:111.86000000000001px;" width="2.6" height="2.6" viewBox="0 0 10 10"><path d="M1.500 0v10L8.500 5z" fill="#9aa0a6"/></svg>
<svg style="left:569.6px;top:110.56000000000002px;" width="5" height="5.2" viewBox="0 0 20 20"><circle cx="8" cy="13" r="5" fill="none" stroke="#d0d3d7" stroke-width="2"/><path d="M11.500 9.500L16 3M13 2l5 3.500" stroke="#d0d3d7" stroke-width="2" fill="none"/></svg>
<div class="t s" style="left:576.0px;top:109px;font-size:4.2px;color:#e8eaed;transform:scaleX(0.9921);transform-origin:0 50%;">javascript</div>
<div style="left:804.2px;top:33.0px;width:72.79999999999995px;height:7.6px;background:#292a2d;"></div>
<div style="left:804.2px;top:32px;width:72.79999999999995px;height:1px;background:rgba(52,54,58,0.10);"></div>
<div style="left:804.2px;top:33px;width:72.79999999999995px;height:1px;background:rgba(52,54,58,0.40);"></div>
<svg style="left:805.3000000000001px;top:35.699999999999996px;" width="2.6" height="2.6" viewBox="0 0 10 10"><path d="M0 1.500h10L5 8.500z" fill="#9aa0a6"/></svg>
<div class="t s" style="left:809.9px;top:33px;font-size:4.2px;color:#e8eaed;transform:scaleX(0.93);transform-origin:0 50%;">Threads</div>
<svg style="left:804.8px;top:42.2px;" width="3.6" height="3.6" viewBox="0 0 3.6 3.6"><circle cx="1.800" cy="1.800" r="1.600" fill="#5b9dff"/></svg>
<div style="left:804.2px;top:47.8px;width:72.79999999999995px;height:0.5px;background:#2e3033;"></div>
<div class="t s" style="left:810.7px;top:40px;font-size:4.2px;color:#e8eaed;transform:scaleX(0.9337);transform-origin:0 50%;">Main</div>
<div class="t s" style="left:810.7px;top:48px;font-size:4.2px;color:#e8eaed;transform:scaleX(0.885);transform-origin:0 50%;">javascript</div>
<div style="left:804.2px;top:55.5px;width:72.79999999999995px;height:7.6px;background:#292a2d;"></div>
<div style="left:804.2px;top:55px;width:72.79999999999995px;height:1px;background:rgba(52,54,58,0.50);"></div>
<svg style="left:805.5px;top:58.0px;" width="2.6" height="2.6" viewBox="0 0 10 10"><path d="M1.500 0v10L8.500 5z" fill="#9aa0a6"/></svg>
<div class="t s" style="left:809.9px;top:56px;font-size:4.2px;color:#e8eaed;transform:scaleX(0.93);transform-origin:0 50%;">Watch</div>
<div style="left:804.2px;top:63.2px;width:72.79999999999995px;height:7.6px;background:#292a2d;"></div>
<div style="left:804.2px;top:63px;width:72.79999999999995px;height:1px;background:rgba(52,54,58,0.50);"></div>
<svg style="left:805.3000000000001px;top:65.9px;" width="2.6" height="2.6" viewBox="0 0 10 10"><path d="M0 1.500h10L5 8.500z" fill="#9aa0a6"/></svg>
<div class="t s" style="left:809.9px;top:63px;font-size:4.2px;color:#e8eaed;transform:scaleX(0.93);transform-origin:0 50%;">Breakpoints</div>
<div style="left:807.9px;top:73.1px;width:4.0px;height:4.0px;background:#f29900;border-radius:0.6px"></div>
<svg style="left:807.9px;top:73.1px;" width="4.0" height="4.0" viewBox="0 0 10 10"><path d="M2 5l2.200 2.200L8 3" stroke="#202124" stroke-width="1.500" fill="none"/></svg>
<div class="t s" style="left:813.9px;top:71px;font-size:4.4px;color:#e8eaed;transform:scaleX(0.9263);transform-origin:0 50%;">main.bundle.js:formatted:36135</div>
<div class="t m" style="left:813.9px;top:78px;font-size:4.1px;color:#e8eaed;letter-spacing:-0.19px;">console.warn("I am sure t…</div>
<div style="left:804.2px;top:84.2px;width:72.79999999999995px;height:7.6px;background:#292a2d;"></div>
<div style="left:804.2px;top:84px;width:72.79999999999995px;height:1px;background:rgba(52,54,58,0.50);"></div>
<svg style="left:805.3000000000001px;top:86.9px;" width="2.6" height="2.6" viewBox="0 0 10 10"><path d="M0 1.500h10L5 8.500z" fill="#9aa0a6"/></svg>
<div class="t s" style="left:809.9px;top:84px;font-size:4.2px;color:#e8eaed;transform:scaleX(0.93);transform-origin:0 50%;">Scope</div>
<div class="t s i" style="left:830.311px;top:93px;font-size:4.2px;color:#80868b;transform:scaleX(0.93);transform-origin:0 50%;">Not paused</div>
<div style="left:804.2px;top:101.2px;width:72.79999999999995px;height:7.6px;background:#292a2d;"></div>
<div style="left:804.2px;top:101px;width:72.79999999999995px;height:1px;background:rgba(52,54,58,0.50);"></div>
<svg style="left:805.3000000000001px;top:103.9px;" width="2.6" height="2.6" viewBox="0 0 10 10"><path d="M0 1.500h10L5 8.500z" fill="#9aa0a6"/></svg>
<div class="t s" style="left:809.9px;top:101px;font-size:4.2px;color:#e8eaed;transform:scaleX(0.93);transform-origin:0 50%;">Call Stack</div>
<div class="t s i" style="left:830.311px;top:110px;font-size:4.2px;color:#80868b;transform:scaleX(0.93);transform-origin:0 50%;">Not paused</div>
<div style="left:804.2px;top:118.5px;width:72.79999999999995px;height:7.6px;background:#292a2d;"></div>
<div style="left:804.2px;top:118px;width:72.79999999999995px;height:1px;background:rgba(52,54,58,0.50);"></div>
<svg style="left:805.5px;top:121.0px;" width="2.6" height="2.6" viewBox="0 0 10 10"><path d="M1.500 0v10L8.500 5z" fill="#9aa0a6"/></svg>
<div class="t s" style="left:809.9px;top:119px;font-size:4.2px;color:#e8eaed;transform:scaleX(0.93);transform-origin:0 50%;">XHR/fetch Breakpoints</div>
<div style="left:804.2px;top:126.10000000000001px;width:72.79999999999995px;height:7.6px;background:#292a2d;"></div>
<div style="left:804.2px;top:126px;width:72.79999999999995px;height:1px;background:rgba(52,54,58,0.50);"></div>
<svg style="left:805.5px;top:128.6px;" width="2.6" height="2.6" viewBox="0 0 10 10"><path d="M1.500 0v10L8.500 5z" fill="#9aa0a6"/></svg>
<div class="t s" style="left:809.9px;top:126px;font-size:4.2px;color:#e8eaed;transform:scaleX(0.93);transform-origin:0 50%;">DOM Breakpoints</div>
<div style="left:804.2px;top:133.7px;width:72.79999999999995px;height:7.6px;background:#292a2d;"></div>
<div style="left:804.2px;top:133px;width:72.79999999999995px;height:1px;background:rgba(52,54,58,0.40);"></div>
<div style="left:804.2px;top:134px;width:72.79999999999995px;height:1px;background:rgba(52,54,58,0.10);"></div>
<svg style="left:805.5px;top:136.2px;" width="2.6" height="2.6" viewBox="0 0 10 10"><path d="M1.500 0v10L8.500 5z" fill="#9aa0a6"/></svg>
<div class="t s" style="left:809.9px;top:134px;font-size:4.2px;color:#e8eaed;transform:scaleX(0.93);transform-origin:0 50%;">Global Listeners</div>
<div style="left:804.2px;top:141.2px;width:72.79999999999995px;height:7.6px;background:#292a2d;"></div>
<div style="left:804.2px;top:141px;width:72.79999999999995px;height:1px;background:rgba(52,54,58,0.50);"></div>
<svg style="left:805.5px;top:143.7px;" width="2.6" height="2.6" viewBox="0 0 10 10"><path d="M1.500 0v10L8.500 5z" fill="#9aa0a6"/></svg>
<div class="t s" style="left:809.9px;top:141px;font-size:4.2px;color:#e8eaed;transform:scaleX(0.93);transform-origin:0 50%;">Event Listener Breakpoints</div>
<div style="left:804.2px;top:148.79999999999998px;width:72.79999999999995px;height:7.6px;background:#292a2d;"></div>
<div style="left:804.2px;top:148px;width:72.79999999999995px;height:1px;background:rgba(52,54,58,0.30);"></div>
<div style="left:804.2px;top:149px;width:72.79999999999995px;height:1px;background:rgba(52,54,58,0.20);"></div>
<svg style="left:805.5px;top:151.29999999999998px;" width="2.6" height="2.6" viewBox="0 0 10 10"><path d="M1.500 0v10L8.500 5z" fill="#9aa0a6"/></svg>
<div class="t s" style="left:809.9px;top:149px;font-size:4.2px;color:#e8eaed;transform:scaleX(0.93);transform-origin:0 50%;">CSP Violation Breakpoints</div>
<div style="left:804.2px;top:156.4px;width:72.79999999999995px;height:323.4px;background:#232427;"></div>
<div style="left:641.2px;top:470.4px;width:162.3px;height:9.4px;background:#292a2d;"></div>
<div style="left:641.2px;top:470.4px;width:162.3px;height:0.6px;background:#35373b;"></div>
<div class="t s" style="left:643.7px;top:472px;font-size:4.2px;color:#9aa0a6;transform:scaleX(0.967);transform-origin:0 50%;">Line 36135, Column 25</div>
<div class="t s" style="left:774.4px;top:472px;font-size:4.2px;color:#9aa0a6;transform:scaleX(0.9589);transform-origin:0 50%;">Coverage: n/a</div>
<div style="left:655.8px;top:273.9485px;width:143.0px;height:9.606px;background:#3b3a1f;"></div>
<div style="left:655.8px;top:33px;width:143.0px;height:437.4px;overflow:hidden">
<div class="t m" style="left:-19.2px;top:0px;font-size:4.1px;color:#e6e6e6;letter-spacing:-0.192px;">                }</div>
<div class="t m" style="left:-19.2px;top:5px;font-size:4.1px;color:#e6e6e6;letter-spacing:-0.192px;">                <span style="color:#9080d2">return </span>i</div>
<div class="t m" style="left:-19.2px;top:10px;font-size:4.1px;color:#e6e6e6;letter-spacing:-0.192px;">            },</div>
<div class="t m" style="left:-19.2px;top:15px;font-size:4.1px;color:#e6e6e6;letter-spacing:-0.192px;">            <span style="color:#d2c057">purchaseSleeveAug</span>: <span style="color:#9080d2">function</span>(<span style="color:#5db0d7">t</span>=<span style="color:#a1f7b5">0</span>, <span style="color:#5db0d7">r</span>=<span style="color:#f28b54">""</span>) {</div>
<div class="t m" style="left:-19.2px;top:20px;font-size:4.1px;color:#e6e6e6;letter-spacing:-0.192px;">                <span style="color:#9080d2">const </span><span style="color:#5db0d7">o </span>= a.<span style="color:#d2c057">number</span>(<span style="color:#f28b54">"purchaseSleeveAug"</span>, <span style="color:#f28b54">"sleeveNumber"</span>, t)</div>
<div class="t m" style="left:-19.2px;top:25px;font-size:4.1px;color:#e6e6e6;letter-spacing:-0.192px;">                  , <span style="color:#5db0d7">i </span>= a.<span style="color:#d2c057">string</span>(<span style="color:#f28b54">"setToUniversityCourse"</span>, <span style="color:#f28b54">"augName"</span>, r);</div>
<div class="t m" style="left:-19.2px;top:29px;font-size:4.1px;color:#e6e6e6;letter-spacing:-0.192px;">                a.<span style="color:#d2c057">updateDynamicRam</span>(<span style="color:#f28b54">"purchaseSleeveAug"</span>, Object(n.<span style="color:#d2c057">c</span>)(e, <span style="color:#f28b54">"purchaseSleeveAug"</span>)),</div>
<div class="t m" style="left:-19.2px;top:34px;font-size:4.1px;color:#e6e6e6;letter-spacing:-0.192px;">                u(<span style="color:#f28b54">"purchaseSleeveAug"</span>),</div>
<div class="t m" style="left:-19.2px;top:39px;font-size:4.1px;color:#e6e6e6;letter-spacing:-0.192px;">                m(<span style="color:#f28b54">"purchaseSleeveAug"</span>, o);</div>
<div class="t m" style="left:-19.2px;top:44px;font-size:4.1px;color:#e6e6e6;letter-spacing:-0.192px;">                <span style="color:#9080d2">const </span><span style="color:#5db0d7">s </span>= l.<span style="color:#d2c057">a</span>[i];</div>
<div class="t m" style="left:-19.2px;top:49px;font-size:4.1px;color:#e6e6e6;letter-spacing:-0.192px;">                <span style="color:#9080d2">if </span>(!s)</div>
<div class="t m" style="left:-19.2px;top:53px;font-size:4.1px;color:#e6e6e6;letter-spacing:-0.192px;">                    <span style="color:#9080d2">throw </span>a.<span style="color:#d2c057">makeRuntimeErrorMsg</span>(<span style="color:#f28b54">"sleeve.purchaseSleeveAug"</span>, <span style="color:#f28b54">`Invalid aug: ${i}`</span>);</div>
<div class="t m" style="left:-19.2px;top:58px;font-size:4.1px;color:#e6e6e6;letter-spacing:-0.192px;">                <span style="color:#9080d2">return </span>e.<span style="color:#d2c057">sleeves</span>[o].<span style="color:#d2c057">tryBuyAugmentation</span>(e, s)</div>
<div class="t m" style="left:-19.2px;top:63px;font-size:4.1px;color:#e6e6e6;letter-spacing:-0.192px;">            }</div>
<div class="t m" style="left:-19.2px;top:68px;font-size:4.1px;color:#e6e6e6;letter-spacing:-0.192px;">        }</div>
<div class="t m" style="left:-19.2px;top:73px;font-size:4.1px;color:#e6e6e6;letter-spacing:-0.192px;">    }</div>
<div class="t m" style="left:-19.2px;top:77px;font-size:4.1px;color:#e6e6e6;letter-spacing:-0.192px;">    )</div>
<div class="t m" style="left:-19.2px;top:82px;font-size:4.1px;color:#e6e6e6;letter-spacing:-0.192px;">}, <span style="color:#9080d2">function</span>(<span style="color:#5db0d7">e</span>, <span style="color:#5db0d7">t</span>, <span style="color:#5db0d7">n</span>) {</div>
<div class="t m" style="left:-19.2px;top:87px;font-size:4.1px;color:#e6e6e6;letter-spacing:-0.192px;">    <span style="color:#f28b54">"use strict"</span>;</div>
<div class="t m" style="left:-19.2px;top:92px;font-size:4.1px;color:#e6e6e6;letter-spacing:-0.192px;">    n.<span style="color:#d2c057">d</span>(t, <span style="color:#f28b54">"a"</span>, (<span style="color:#9080d2">function</span>() {</div>
<div class="t m" style="left:-19.2px;top:97px;font-size:4.1px;color:#e6e6e6;letter-spacing:-0.192px;">        <span style="color:#9080d2">return </span>r</div>
<div class="t m" style="left:-19.2px;top:101px;font-size:4.1px;color:#e6e6e6;letter-spacing:-0.192px;">    }</div>
<div class="t m" style="left:-19.2px;top:106px;font-size:4.1px;color:#e6e6e6;letter-spacing:-0.192px;">    ));</div>
<div class="t m" style="left:-19.2px;top:111px;font-size:4.1px;color:#e6e6e6;letter-spacing:-0.192px;">    <span style="color:#9080d2">var </span><span style="color:#5db0d7">r </span>= n(<span style="color:#a1f7b5">100</span>);</div>
<div class="t m" style="left:-19.2px;top:116px;font-size:4.1px;color:#e6e6e6;letter-spacing:-0.192px;">    <span style="color:#9080d2">function </span><span style="color:#5db0d7">r</span>(<span style="color:#5db0d7">e</span>, <span style="color:#5db0d7">t</span>) {</div>
<div class="t m" style="left:-19.2px;top:121px;font-size:4.1px;color:#e6e6e6;letter-spacing:-0.192px;">        <span style="color:#9080d2">return </span>{</div>
<div class="t m" style="left:-19.2px;top:125px;font-size:4.1px;color:#e6e6e6;letter-spacing:-0.192px;">            <span style="color:#d2c057">heart</span>: {</div>
<div class="t m" style="left:-19.2px;top:130px;font-size:4.1px;color:#e6e6e6;letter-spacing:-0.192px;">                <span style="color:#9080d2">break</span>: <span style="color:#9080d2">function</span>() {</div>
<div class="t m" style="left:-19.2px;top:135px;font-size:4.1px;color:#e6e6e6;letter-spacing:-0.192px;">                    <span style="color:#9080d2">return </span>e.<span style="color:#d2c057">karma</span></div>
<div class="t m" style="left:-19.2px;top:140px;font-size:4.1px;color:#e6e6e6;letter-spacing:-0.192px;">                }</div>
<div class="t m" style="left:-19.2px;top:145px;font-size:4.1px;color:#e6e6e6;letter-spacing:-0.192px;">            },</div>
<div class="t m" style="left:-19.2px;top:149px;font-size:4.1px;color:#e6e6e6;letter-spacing:-0.192px;">            <span style="color:#d2c057">exploit</span>: <span style="color:#9080d2">function</span>() {</div>
<div class="t m" style="left:-19.2px;top:154px;font-size:4.1px;color:#e6e6e6;letter-spacing:-0.192px;">                e.<span style="color:#d2c057">giveExploit</span>(n.<span style="color:#d2c057">a</span>.<span style="color:#d2c057">UndocumentedFunctionCall</span>)</div>
<div class="t m" style="left:-19.2px;top:159px;font-size:4.1px;color:#e6e6e6;letter-spacing:-0.192px;">            },</div>
<div class="t m" style="left:-19.2px;top:164px;font-size:4.1px;color:#e6e6e6;letter-spacing:-0.192px;">            <span style="color:#d2c057">bypass</span>: <span style="color:#9080d2">function</span>(<span style="color:#5db0d7">n</span>) {</div>
<div class="t m" style="left:-19.2px;top:169px;font-size:4.1px;color:#e6e6e6;letter-spacing:-0.192px;">                n.<span style="color:#d2c057">completely_unused_field </span>= <span style="color:#9080d2">void </span><span style="color:#a1f7b5">0</span>;</div>
<div class="t m" style="left:-19.2px;top:173px;font-size:4.1px;color:#e6e6e6;letter-spacing:-0.192px;">                <span style="color:#9080d2">const </span><span style="color:#5db0d7">r </span>= document;</div>
<div class="t m" style="left:-19.2px;top:178px;font-size:4.1px;color:#e6e6e6;letter-spacing:-0.192px;">                r.<span style="color:#d2c057">completely_unused_field </span>= <span style="color:#9080d2">void </span><span style="color:#a1f7b5">0</span>,</div>
<div class="t m" style="left:-19.2px;top:183px;font-size:4.1px;color:#e6e6e6;letter-spacing:-0.192px;">                r.<span style="color:#d2c057">completely_unused_field </span>= !<span style="color:#a1f7b5">0</span>,</div>
<div class="t m" style="left:-19.2px;top:188px;font-size:4.1px;color:#e6e6e6;letter-spacing:-0.192px;">                n.<span style="color:#d2c057">completely_unused_field </span>&amp;&amp; <span style="color:#a1f7b5">1.6 </span>=== t.<span style="color:#d2c057">ramUsage </span>&amp;&amp; e.<span style="color:#d2c057">giveExploit</span>(n.<span style="color:#d2c057">a</span>.<span style="color:#d2c057">Bypass</span>),</div>
<div class="t m" style="left:-19.2px;top:193px;font-size:4.1px;color:#e6e6e6;letter-spacing:-0.192px;">                n.<span style="color:#d2c057">completely_unused_field </span>= <span style="color:#9080d2">void </span><span style="color:#a1f7b5">0</span>,</div>
<div class="t m" style="left:-19.2px;top:197px;font-size:4.1px;color:#e6e6e6;letter-spacing:-0.192px;">                r.<span style="color:#d2c057">completely_unused_field </span>= <span style="color:#9080d2">void </span><span style="color:#a1f7b5">0</span></div>
<div class="t m" style="left:-19.2px;top:202px;font-size:4.1px;color:#e6e6e6;letter-spacing:-0.192px;">            },</div>
<div class="t m" style="left:-19.2px;top:207px;font-size:4.1px;color:#e6e6e6;letter-spacing:-0.192px;">            <span style="color:#d2c057">alterReality</span>: <span style="color:#9080d2">function</span>() {</div>
<div class="t m" style="left:-19.2px;top:212px;font-size:4.1px;color:#e6e6e6;letter-spacing:-0.192px;">                <span style="color:#9080d2">let </span><span style="color:#5db0d7">t </span>= !<span style="color:#a1f7b5">1</span>;</div>
<div class="t m" style="left:-19.2px;top:217px;font-size:4.1px;color:#e6e6e6;letter-spacing:-0.192px;">                <span style="color:#9080d2">const </span><span style="color:#5db0d7">n </span>= <span style="color:#9080d2">function</span>(<span style="color:#5db0d7">e</span>) {</div>
<div class="t m" style="left:-19.2px;top:221px;font-size:4.1px;color:#e6e6e6;letter-spacing:-0.192px;">                    <span style="color:#a1f7b5">0 </span>!== e &amp;&amp; (t = !t,</div>
<div class="t m" style="left:-19.2px;top:226px;font-size:4.1px;color:#e6e6e6;letter-spacing:-0.192px;">                    n(e - <span style="color:#a1f7b5">1</span>))</div>
<div class="t m" style="left:-19.2px;top:231px;font-size:4.1px;color:#e6e6e6;letter-spacing:-0.192px;">                };</div>
<div class="t m" style="left:-19.2px;top:236px;font-size:4.1px;color:#e6e6e6;letter-spacing:-0.192px;">                n(<span style="color:#a1f7b5">2</span>),</div>
<div class="t m" style="left:-19.2px;top:241px;font-size:4.1px;color:#e6e6e6;letter-spacing:-0.192px;">                console.<span style="color:#d2c057">warn</span>(<span style="color:#f28b54">"I am sure that this variable is false."</span>),</div>
<div class="t m" style="left:-19.2px;top:245px;font-size:4.1px;color:#e6e6e6;letter-spacing:-0.192px;">                !<span style="color:#a1f7b5">1 </span>!== t &amp;&amp; (console.<span style="color:#d2c057">warn</span>(<span style="color:#f28b54">"Reality has been altered!"</span>),</div>
<div class="t m" style="left:-19.2px;top:250px;font-size:4.1px;color:#e6e6e6;letter-spacing:-0.192px;">                e.<span style="color:#d2c057">giveExploit</span>(n.<span style="color:#d2c057">a</span>.<span style="color:#d2c057">RealityAlteration</span>))</div>
<div class="t m" style="left:-19.2px;top:255px;font-size:4.1px;color:#e6e6e6;letter-spacing:-0.192px;">            }</div>
<div class="t m" style="left:-19.2px;top:260px;font-size:4.1px;color:#e6e6e6;letter-spacing:-0.192px;">        }</div>
<div class="t m" style="left:-19.2px;top:265px;font-size:4.1px;color:#e6e6e6;letter-spacing:-0.192px;">    }</div>
<div class="t m" style="left:-19.2px;top:269px;font-size:4.1px;color:#e6e6e6;letter-spacing:-0.192px;">    )</div>
<div class="t m" style="left:-19.2px;top:274px;font-size:4.1px;color:#e6e6e6;letter-spacing:-0.192px;">}, <span style="color:#9080d2">function</span>(<span style="color:#5db0d7">e</span>, <span style="color:#5db0d7">t</span>, <span style="color:#5db0d7">n</span>) {</div>
<div class="t m" style="left:-19.2px;top:279px;font-size:4.1px;color:#e6e6e6;letter-spacing:-0.192px;">    <span style="color:#f28b54">"use strict"</span>;</div>
<div class="t m" style="left:-19.2px;top:284px;font-size:4.1px;color:#e6e6e6;letter-spacing:-0.192px;">    n.<span style="color:#d2c057">d</span>(t, <span style="color:#f28b54">"a"</span>, (<span style="color:#9080d2">function</span>() {</div>
<div class="t m" style="left:-19.2px;top:289px;font-size:4.1px;color:#e6e6e6;letter-spacing:-0.192px;">        <span style="color:#9080d2">return </span>c</div>
<div class="t m" style="left:-19.2px;top:293px;font-size:4.1px;color:#e6e6e6;letter-spacing:-0.192px;">    }</div>
<div class="t m" style="left:-19.2px;top:298px;font-size:4.1px;color:#e6e6e6;letter-spacing:-0.192px;">    ));</div>
<div class="t m" style="left:-19.2px;top:303px;font-size:4.1px;color:#e6e6e6;letter-spacing:-0.192px;">    <span style="color:#9080d2">var </span><span style="color:#5db0d7">r </span>= n(<span style="color:#a1f7b5">35</span>)</div>
<div class="t m" style="left:-19.2px;top:308px;font-size:4.1px;color:#e6e6e6;letter-spacing:-0.192px;">      , <span style="color:#5db0d7">a </span>= n(<span style="color:#a1f7b5">55</span>)</div>
<div class="t m" style="left:-19.2px;top:313px;font-size:4.1px;color:#e6e6e6;letter-spacing:-0.192px;">      , <span style="color:#5db0d7">i </span>= n(<span style="color:#a1f7b5">87</span>)</div>
<div class="t m" style="left:-19.2px;top:317px;font-size:4.1px;color:#e6e6e6;letter-spacing:-0.192px;">      , <span style="color:#5db0d7">o </span>= n(<span style="color:#a1f7b5">211</span>)</div>
<div class="t m" style="left:-19.2px;top:322px;font-size:4.1px;color:#e6e6e6;letter-spacing:-0.192px;">      , <span style="color:#5db0d7">s </span>= n(<span style="color:#a1f7b5">232</span>)</div>
<div class="t m" style="left:-19.2px;top:327px;font-size:4.1px;color:#e6e6e6;letter-spacing:-0.192px;">      , <span style="color:#5db0d7">l </span>= n(<span style="color:#a1f7b5">25</span>);</div>
<div class="t m" style="left:-19.2px;top:332px;font-size:4.1px;color:#e6e6e6;letter-spacing:-0.192px;">    <span style="color:#9080d2">function </span><span style="color:#5db0d7">c</span>(<span style="color:#5db0d7">e</span>, <span style="color:#5db0d7">t</span>, <span style="color:#5db0d7">n</span>) {</div>
<div class="t m" style="left:-19.2px;top:337px;font-size:4.1px;color:#e6e6e6;letter-spacing:-0.192px;">        <span style="color:#9080d2">const </span><span style="color:#5db0d7">c </span>= <span style="color:#9080d2">function</span>(<span style="color:#5db0d7">t</span>, <span style="color:#5db0d7">n</span>=<span style="color:#f28b54">""</span>) {</div>
<div class="t m" style="left:-19.2px;top:342px;font-size:4.1px;color:#e6e6e6;letter-spacing:-0.192px;">            <span style="color:#9080d2">if </span>(isNaN(t))</div>
<div class="t m" style="left:-19.2px;top:346px;font-size:4.1px;color:#e6e6e6;letter-spacing:-0.192px;">                <span style="color:#9080d2">throw </span>n.<span style="color:#d2c057">makeRuntimeErrorMsg</span>(n, <span style="color:#f28b54">"Invalid index specified for Hacknet Node: " </span>+ t);</div>
<div class="t m" style="left:-19.2px;top:351px;font-size:4.1px;color:#e6e6e6;letter-spacing:-0.192px;">            <span style="color:#9080d2">if </span>(t &lt; <span style="color:#a1f7b5">0 </span>|| t &gt;= e.<span style="color:#d2c057">hacknetNodes</span>.<span style="color:#d2c057">length</span>)</div>
<div class="t m" style="left:-19.2px;top:356px;font-size:4.1px;color:#e6e6e6;letter-spacing:-0.192px;">                <span style="color:#9080d2">throw </span>n.<span style="color:#d2c057">makeRuntimeErrorMsg</span>(n, <span style="color:#f28b54">"Index specified for Hacknet Node is out-of-bounds: " </span>+ t);</div>
<div class="t m" style="left:-19.2px;top:361px;font-size:4.1px;color:#e6e6e6;letter-spacing:-0.192px;">            <span style="color:#9080d2">if </span>(Object(r.<span style="color:#d2c057">g</span>)(e)) {</div>
<div class="t m" style="left:-19.2px;top:366px;font-size:4.1px;color:#e6e6e6;letter-spacing:-0.192px;">                <span style="color:#9080d2">const </span><span style="color:#5db0d7">r </span>= e.<span style="color:#d2c057">hacknetNodes</span>[t];</div>
<div class="t m" style="left:-19.2px;top:370px;font-size:4.1px;color:#e6e6e6;letter-spacing:-0.192px;">                <span style="color:#9080d2">if </span>(<span style="color:#f28b54">"string" </span>!= <span style="color:#9080d2">typeof </span>r)</div>
<div class="t m" style="left:-19.2px;top:375px;font-size:4.1px;color:#e6e6e6;letter-spacing:-0.192px;">                    <span style="color:#9080d2">throw new </span>Error(<span style="color:#f28b54">"hacknet node was not a string"</span>);</div>
<div class="t m" style="left:-19.2px;top:380px;font-size:4.1px;color:#e6e6e6;letter-spacing:-0.192px;">                <span style="color:#9080d2">const </span><span style="color:#5db0d7">i </span>= Object(l.<span style="color:#d2c057">d</span>)(r);</div>
<div class="t m" style="left:-19.2px;top:385px;font-size:4.1px;color:#e6e6e6;letter-spacing:-0.192px;">                <span style="color:#9080d2">if </span>(!(i <span style="color:#9080d2">instanceof </span>o.<span style="color:#d2c057">a</span>))</div>
<div class="t m" style="left:-19.2px;top:390px;font-size:4.1px;color:#e6e6e6;letter-spacing:-0.192px;">                    <span style="color:#9080d2">throw new </span>Error(<span style="color:#f28b54">"hacknet server was not actually hacknet server"</span>);</div>
<div class="t m" style="left:-19.2px;top:394px;font-size:4.1px;color:#e6e6e6;letter-spacing:-0.192px;">                <span style="color:#9080d2">if </span>(<span style="color:#a1f7b5">null </span>== i)</div>
<div class="t m" style="left:-19.2px;top:399px;font-size:4.1px;color:#e6e6e6;letter-spacing:-0.192px;">                    <span style="color:#9080d2">throw </span>n.<span style="color:#d2c057">makeRuntimeErrorMsg</span>(n, <span style="color:#f28b54">`Could not get Hacknet Server for index ${t}. This is probably a bug`</span>);</div>
<div class="t m" style="left:-19.2px;top:404px;font-size:4.1px;color:#e6e6e6;letter-spacing:-0.192px;">                <span style="color:#9080d2">return </span>i</div>
<div class="t m" style="left:-19.2px;top:409px;font-size:4.1px;color:#e6e6e6;letter-spacing:-0.192px;">            }</div>
<div class="t m" style="left:-19.2px;top:414px;font-size:4.1px;color:#e6e6e6;letter-spacing:-0.192px;">            {</div>
<div class="t m" style="left:-19.2px;top:418px;font-size:4.1px;color:#e6e6e6;letter-spacing:-0.192px;">                <span style="color:#9080d2">const </span><span style="color:#5db0d7">a </span>= e.<span style="color:#d2c057">hacknetNodes</span>[t];</div>
<div class="t m" style="left:-19.2px;top:423px;font-size:4.1px;color:#e6e6e6;letter-spacing:-0.192px;">                <span style="color:#9080d2">if </span>(!(a <span style="color:#9080d2">instanceof </span>i.<span style="color:#d2c057">a</span>))</div>
<div class="t m" style="left:-19.2px;top:428px;font-size:4.1px;color:#e6e6e6;letter-spacing:-0.192px;">                    <span style="color:#9080d2">throw new </span>Error(<span style="color:#f28b54">"hacknet node was not node."</span>);</div>
<div style="left:35.0px;top:245px;width:120px;height:1px;background:rgba(176,42,36,0.62)"></div>
<div style="left:45.6px;top:250px;width:120px;height:1px;background:rgba(176,42,36,0.62)"></div>
</div>
<div style="left:641.2px;top:33.4px;width:14.599999999999909px;height:437px;background:#202124;"></div>
<div class="t m" style="right:221.79999999999995px;top:33px;font-size:4.1px;color:#a4a8ad;letter-spacing:-0.192px;">36085</div>
<div class="t m" style="right:221.79999999999995px;top:38px;font-size:4.1px;color:#a4a8ad;letter-spacing:-0.192px;">36086</div>
<div class="t m" style="right:221.79999999999995px;top:43px;font-size:4.1px;color:#a4a8ad;letter-spacing:-0.192px;">36087</div>
<div class="t m" style="right:221.79999999999995px;top:48px;font-size:4.1px;color:#a4a8ad;letter-spacing:-0.192px;">36088</div>
<div class="t m" style="right:221.79999999999995px;top:53px;font-size:4.1px;color:#a4a8ad;letter-spacing:-0.192px;">36089</div>
<div class="t m" style="right:221.79999999999995px;top:58px;font-size:4.1px;color:#a4a8ad;letter-spacing:-0.192px;">36090</div>
<div class="t m" style="right:221.79999999999995px;top:62px;font-size:4.1px;color:#a4a8ad;letter-spacing:-0.192px;">36091</div>
<div class="t m" style="right:221.79999999999995px;top:67px;font-size:4.1px;color:#a4a8ad;letter-spacing:-0.192px;">36092</div>
<div class="t m" style="right:221.79999999999995px;top:72px;font-size:4.1px;color:#a4a8ad;letter-spacing:-0.192px;">36093</div>
<div class="t m" style="right:221.79999999999995px;top:77px;font-size:4.1px;color:#a4a8ad;letter-spacing:-0.192px;">36094</div>
<div class="t m" style="right:221.79999999999995px;top:82px;font-size:4.1px;color:#a4a8ad;letter-spacing:-0.192px;">36095</div>
<div class="t m" style="right:221.79999999999995px;top:86px;font-size:4.1px;color:#a4a8ad;letter-spacing:-0.192px;">36096</div>
<div class="t m" style="right:221.79999999999995px;top:91px;font-size:4.1px;color:#a4a8ad;letter-spacing:-0.192px;">36097</div>
<div class="t m" style="right:221.79999999999995px;top:96px;font-size:4.1px;color:#a4a8ad;letter-spacing:-0.192px;">36098</div>
<div class="t m" style="right:221.79999999999995px;top:101px;font-size:4.1px;color:#a4a8ad;letter-spacing:-0.192px;">36099</div>
<div class="t m" style="right:221.79999999999995px;top:106px;font-size:4.1px;color:#a4a8ad;letter-spacing:-0.192px;">36100</div>
<div class="t m" style="right:221.79999999999995px;top:110px;font-size:4.1px;color:#a4a8ad;letter-spacing:-0.192px;">36101</div>
<div class="t m" style="right:221.79999999999995px;top:115px;font-size:4.1px;color:#a4a8ad;letter-spacing:-0.192px;">36102</div>
<div class="t m" style="right:221.79999999999995px;top:120px;font-size:4.1px;color:#a4a8ad;letter-spacing:-0.192px;">36103</div>
<div class="t m" style="right:221.79999999999995px;top:125px;font-size:4.1px;color:#a4a8ad;letter-spacing:-0.192px;">36104</div>
<div class="t m" style="right:221.79999999999995px;top:130px;font-size:4.1px;color:#a4a8ad;letter-spacing:-0.192px;">36105</div>
<div class="t m" style="right:221.79999999999995px;top:134px;font-size:4.1px;color:#a4a8ad;letter-spacing:-0.192px;">36106</div>
<div class="t m" style="right:221.79999999999995px;top:139px;font-size:4.1px;color:#a4a8ad;letter-spacing:-0.192px;">36107</div>
<div class="t m" style="right:221.79999999999995px;top:144px;font-size:4.1px;color:#a4a8ad;letter-spacing:-0.192px;">36108</div>
<div class="t m" style="right:221.79999999999995px;top:149px;font-size:4.1px;color:#a4a8ad;letter-spacing:-0.192px;">36109</div>
<div class="t m" style="right:221.79999999999995px;top:154px;font-size:4.1px;color:#a4a8ad;letter-spacing:-0.192px;">36110</div>
<div class="t m" style="right:221.79999999999995px;top:158px;font-size:4.1px;color:#a4a8ad;letter-spacing:-0.192px;">36111</div>
<div class="t m" style="right:221.79999999999995px;top:163px;font-size:4.1px;color:#a4a8ad;letter-spacing:-0.192px;">36112</div>
<div class="t m" style="right:221.79999999999995px;top:168px;font-size:4.1px;color:#a4a8ad;letter-spacing:-0.192px;">36113</div>
<div class="t m" style="right:221.79999999999995px;top:173px;font-size:4.1px;color:#a4a8ad;letter-spacing:-0.192px;">36114</div>
<div class="t m" style="right:221.79999999999995px;top:178px;font-size:4.1px;color:#a4a8ad;letter-spacing:-0.192px;">36115</div>
<div class="t m" style="right:221.79999999999995px;top:182px;font-size:4.1px;color:#a4a8ad;letter-spacing:-0.192px;">36116</div>
<div class="t m" style="right:221.79999999999995px;top:187px;font-size:4.1px;color:#a4a8ad;letter-spacing:-0.192px;">36117</div>
<div class="t m" style="right:221.79999999999995px;top:192px;font-size:4.1px;color:#a4a8ad;letter-spacing:-0.192px;">36118</div>
<div class="t m" style="right:221.79999999999995px;top:197px;font-size:4.1px;color:#a4a8ad;letter-spacing:-0.192px;">36119</div>
<div class="t m" style="right:221.79999999999995px;top:202px;font-size:4.1px;color:#a4a8ad;letter-spacing:-0.192px;">36120</div>
<div class="t m" style="right:221.79999999999995px;top:206px;font-size:4.1px;color:#a4a8ad;letter-spacing:-0.192px;">36121</div>
<div class="t m" style="right:221.79999999999995px;top:211px;font-size:4.1px;color:#a4a8ad;letter-spacing:-0.192px;">36122</div>
<div class="t m" style="right:221.79999999999995px;top:216px;font-size:4.1px;color:#a4a8ad;letter-spacing:-0.192px;">36123</div>
<div class="t m" style="right:221.79999999999995px;top:221px;font-size:4.1px;color:#a4a8ad;letter-spacing:-0.192px;">36124</div>
<div class="t m" style="right:221.79999999999995px;top:226px;font-size:4.1px;color:#a4a8ad;letter-spacing:-0.192px;">36125</div>
<div class="t m" style="right:221.79999999999995px;top:230px;font-size:4.1px;color:#a4a8ad;letter-spacing:-0.192px;">36126</div>
<div class="t m" style="right:221.79999999999995px;top:235px;font-size:4.1px;color:#a4a8ad;letter-spacing:-0.192px;">36127</div>
<div class="t m" style="right:221.79999999999995px;top:240px;font-size:4.1px;color:#a4a8ad;letter-spacing:-0.192px;">36128</div>
<div class="t m" style="right:221.79999999999995px;top:245px;font-size:4.1px;color:#a4a8ad;letter-spacing:-0.192px;">36129</div>
<div class="t m" style="right:221.79999999999995px;top:250px;font-size:4.1px;color:#a4a8ad;letter-spacing:-0.192px;">36130</div>
<div class="t m" style="right:221.79999999999995px;top:254px;font-size:4.1px;color:#a4a8ad;letter-spacing:-0.192px;">36131</div>
<div class="t m" style="right:221.79999999999995px;top:259px;font-size:4.1px;color:#a4a8ad;letter-spacing:-0.192px;">36132</div>
<div class="t m" style="right:221.79999999999995px;top:264px;font-size:4.1px;color:#a4a8ad;letter-spacing:-0.192px;">36133</div>
<div class="t m" style="right:221.79999999999995px;top:269px;font-size:4.1px;color:#a4a8ad;letter-spacing:-0.192px;">36134</div>
<svg style="left:640.6px;top:273.95000000000005px;" width="17.2" height="4.8" viewBox="0 0 17.2 4.8"><path d="M0 0h15.200L17.200 2.400 15.200 4.800H0z" fill="#4285f4"/></svg>
<div class="t m" style="right:221.79999999999995px;top:274px;font-size:4.1px;color:#fff;letter-spacing:-0.192px;">36135</div>
<div class="t m" style="right:221.79999999999995px;top:278px;font-size:4.1px;color:#a4a8ad;letter-spacing:-0.192px;">36136</div>
<div class="t m" style="right:221.79999999999995px;top:283px;font-size:4.1px;color:#a4a8ad;letter-spacing:-0.192px;">36137</div>
<div class="t m" style="right:221.79999999999995px;top:288px;font-size:4.1px;color:#a4a8ad;letter-spacing:-0.192px;">36138</div>
<div class="t m" style="right:221.79999999999995px;top:293px;font-size:4.1px;color:#a4a8ad;letter-spacing:-0.192px;">36139</div>
<div class="t m" style="right:221.79999999999995px;top:298px;font-size:4.1px;color:#a4a8ad;letter-spacing:-0.192px;">36140</div>
<div class="t m" style="right:221.79999999999995px;top:302px;font-size:4.1px;color:#a4a8ad;letter-spacing:-0.192px;">36141</div>
<div class="t m" style="right:221.79999999999995px;top:307px;font-size:4.1px;color:#a4a8ad;letter-spacing:-0.192px;">36142</div>
<div class="t m" style="right:221.79999999999995px;top:312px;font-size:4.1px;color:#a4a8ad;letter-spacing:-0.192px;">36143</div>
<div class="t m" style="right:221.79999999999995px;top:317px;font-size:4.1px;color:#a4a8ad;letter-spacing:-0.192px;">36144</div>
<div class="t m" style="right:221.79999999999995px;top:322px;font-size:4.1px;color:#a4a8ad;letter-spacing:-0.192px;">36145</div>
<div class="t m" style="right:221.79999999999995px;top:326px;font-size:4.1px;color:#a4a8ad;letter-spacing:-0.192px;">36146</div>
<div class="t m" style="right:221.79999999999995px;top:331px;font-size:4.1px;color:#a4a8ad;letter-spacing:-0.192px;">36147</div>
<div class="t m" style="right:221.79999999999995px;top:336px;font-size:4.1px;color:#a4a8ad;letter-spacing:-0.192px;">36148</div>
<div class="t m" style="right:221.79999999999995px;top:341px;font-size:4.1px;color:#a4a8ad;letter-spacing:-0.192px;">36149</div>
<div class="t m" style="right:221.79999999999995px;top:346px;font-size:4.1px;color:#a4a8ad;letter-spacing:-0.192px;">36150</div>
<div class="t m" style="right:221.79999999999995px;top:350px;font-size:4.1px;color:#a4a8ad;letter-spacing:-0.192px;">36151</div>
<div class="t m" style="right:221.79999999999995px;top:355px;font-size:4.1px;color:#a4a8ad;letter-spacing:-0.192px;">36152</div>
<div class="t m" style="right:221.79999999999995px;top:360px;font-size:4.1px;color:#a4a8ad;letter-spacing:-0.192px;">36153</div>
<div class="t m" style="right:221.79999999999995px;top:365px;font-size:4.1px;color:#a4a8ad;letter-spacing:-0.192px;">36154</div>
<div class="t m" style="right:221.79999999999995px;top:370px;font-size:4.1px;color:#a4a8ad;letter-spacing:-0.192px;">36155</div>
<div class="t m" style="right:221.79999999999995px;top:375px;font-size:4.1px;color:#a4a8ad;letter-spacing:-0.192px;">36156</div>
<div class="t m" style="right:221.79999999999995px;top:379px;font-size:4.1px;color:#a4a8ad;letter-spacing:-0.192px;">36157</div>
<div class="t m" style="right:221.79999999999995px;top:384px;font-size:4.1px;color:#a4a8ad;letter-spacing:-0.192px;">36158</div>
<div class="t m" style="right:221.79999999999995px;top:389px;font-size:4.1px;color:#a4a8ad;letter-spacing:-0.192px;">36159</div>
<div class="t m" style="right:221.79999999999995px;top:394px;font-size:4.1px;color:#a4a8ad;letter-spacing:-0.192px;">36160</div>
<div class="t m" style="right:221.79999999999995px;top:399px;font-size:4.1px;color:#a4a8ad;letter-spacing:-0.192px;">36161</div>
<div class="t m" style="right:221.79999999999995px;top:403px;font-size:4.1px;color:#a4a8ad;letter-spacing:-0.192px;">36162</div>
<div class="t m" style="right:221.79999999999995px;top:408px;font-size:4.1px;color:#a4a8ad;letter-spacing:-0.192px;">36163</div>
<div class="t m" style="right:221.79999999999995px;top:413px;font-size:4.1px;color:#a4a8ad;letter-spacing:-0.192px;">36164</div>
<div class="t m" style="right:221.79999999999995px;top:418px;font-size:4.1px;color:#a4a8ad;letter-spacing:-0.192px;">36165</div>
<div class="t m" style="right:221.79999999999995px;top:423px;font-size:4.1px;color:#a4a8ad;letter-spacing:-0.192px;">36166</div>
<div class="t m" style="right:221.79999999999995px;top:427px;font-size:4.1px;color:#a4a8ad;letter-spacing:-0.192px;">36167</div>
<div class="t m" style="right:221.79999999999995px;top:432px;font-size:4.1px;color:#a4a8ad;letter-spacing:-0.192px;">36168</div>
<div class="t m" style="right:221.79999999999995px;top:437px;font-size:4.1px;color:#a4a8ad;letter-spacing:-0.192px;">36169</div>
<div class="t m" style="right:221.79999999999995px;top:442px;font-size:4.1px;color:#a4a8ad;letter-spacing:-0.192px;">36170</div>
<div class="t m" style="right:221.79999999999995px;top:447px;font-size:4.1px;color:#a4a8ad;letter-spacing:-0.192px;">36171</div>
<div class="t m" style="right:221.79999999999995px;top:451px;font-size:4.1px;color:#a4a8ad;letter-spacing:-0.192px;">36172</div>
<div class="t m" style="right:221.79999999999995px;top:456px;font-size:4.1px;color:#a4a8ad;letter-spacing:-0.192px;">36173</div>
<div class="t m" style="right:221.79999999999995px;top:461px;font-size:4.1px;color:#a4a8ad;letter-spacing:-0.192px;">36174</div>
<div class="t m" style="right:221.79999999999995px;top:466px;font-size:4.1px;color:#a4a8ad;letter-spacing:-0.192px;">36175</div>
<div style="left:798.8px;top:33.4px;width:4.7px;height:437px;background:#27282b;"></div>
<div style="left:799.0px;top:287.0px;width:4.3px;height:5.8px;background:#454649;"></div>
<div style="left:655.8px;top:466.0px;width:143.0px;height:4.4px;background:#27282b;"></div>
<div style="left:656.2px;top:466.2px;width:7.0px;height:4.0px;background:#454649;"></div>
<div style="left:0px;top:479.8px;width:877px;height:13.199999999999989px;background:#24282c;background:linear-gradient(90deg,#23272b 0,#23272b 34%,#2b2e31 50%,#303234 64%,#2f3133 78%,#282b2e 90%,#25282b 100%)"></div>
<svg style="left:4.699999999999999px;top:483.7px;" width="6.2" height="6.4" viewBox="0 0 10 10"><path d="M0 1.400l4.300-.6v4.100H0zM5 .7L10 0v4.900H5zM0 5.600h4.300v4.100L0 9.100zM5 5.600h5V10l-5-.7z" fill="#fff"/></svg>
<svg style="left:20.58px;top:483.5px;" width="8.2" height="6.6" viewBox="0 0 12 10"><path d="M0 .5h4.500l1 1.300H12V10H0z" fill="#e8b13a"/><path d="M0 3h12v7H0z" fill="#fbd35f"/><path d="M3.300 6.300h5.400V10H3.300z" fill="#3a8ad8"/><path d="M4.600 7.800h2.800V10H4.600z" fill="#fbd35f"/></svg>
<svg style="left:37.26px;top:482.7px;" width="8.6" height="8.6" viewBox="0 0 12 12"><circle cx="6" cy="6" r="6" fill="#12305e"/><circle cx="8" cy="4.500" r="1.900" fill="none" stroke="#fff" stroke-width="1.100"/><circle cx="4.300" cy="8" r="1.500" fill="#fff"/><path d="M.3 5.300l4.300 2.200 2.500-2" stroke="#fff" stroke-width="1.500" fill="none"/></svg>
<div style="left:34.959999999999994px;top:492px;width:13.2px;height:1px;background:rgba(63,88,112,0.60);"></div>
<svg style="left:54.04px;top:482.59999999999997px;" width="8.8" height="8.6" viewBox="0 0 12 12"><ellipse cx="6" cy="6" rx="5.200" ry="5.200" fill="#2a0a12" stroke="#e2324c" stroke-width="1.300"/><ellipse cx="6" cy="6" rx="2.300" ry="3.900" fill="none" stroke="#e2324c" stroke-width=".9"/></svg>
<div style="left:51.839999999999996px;top:492px;width:13.2px;height:1px;background:rgba(63,88,112,0.60);"></div>
<svg style="left:71.22px;top:483.0px;" width="8.2" height="7.8" viewBox="0 0 8.2 7.8"><rect x=".35" y=".35" width="7.500" height="7.100" rx=".7" fill="#2a0a3a" stroke="#b45fd2" stroke-width=".7"/></svg>
<div class="t s b" style="left:73.12px;top:483px;font-size:3.6px;color:#e4a8ff;">Pr</div>
<svg style="left:88.1px;top:483.0px;" width="8.2" height="7.8" viewBox="0 0 8.2 7.8"><rect x=".35" y=".35" width="7.500" height="7.100" rx=".7" fill="#06222e" stroke="#2fa3c6" stroke-width=".7"/></svg>
<div class="t s b" style="left:90.0px;top:483px;font-size:3.6px;color:#7ad8f8;">Ps</div>
<svg style="left:104.98px;top:483.0px;" width="8.2" height="7.8" viewBox="0 0 8.2 7.8"><rect x=".35" y=".35" width="7.500" height="7.100" rx=".7" fill="#1f0a40" stroke="#a273d6" stroke-width=".7"/></svg>
<div class="t s b" style="left:106.88px;top:483px;font-size:3.6px;color:#d9b8ff;">Ae</div>
<svg style="left:121.86px;top:483.0px;" width="8.2" height="7.8" viewBox="0 0 8.2 7.8"><rect x=".35" y=".35" width="7.500" height="7.100" rx=".7" fill="#2e1500" stroke="#d4761e" stroke-width=".7"/></svg>
<div class="t s b" style="left:123.76px;top:483px;font-size:3.6px;color:#ffa53a;">Ai</div>
<svg style="left:138.74px;top:483.0px;" width="8.2" height="7.8" viewBox="0 0 8.2 7.8"><rect x=".35" y=".35" width="7.500" height="7.100" rx=".7" fill="#0c0c46" stroke="#5a4cc0" stroke-width=".7"/></svg>
<div class="t s b" style="left:140.64px;top:483px;font-size:3.6px;color:#b9b4ff;">Me</div>
<svg style="left:155.62px;top:482.79999999999995px;" width="8.2" height="8.2" viewBox="0 0 12 12"><circle cx="6" cy="6" r="5.300" fill="#1a1a1a" stroke="#d0d0d0" stroke-width=".9"/><path d="M6 6V1.200M6 6l4.200 2.400M6 6L1.800 8.400" stroke="#d0d0d0" stroke-width=".9"/><circle cx="6" cy="6" r="1.200" fill="#1a1a1a"/></svg>
<svg style="left:172.4px;top:482.79999999999995px;" width="9.4" height="8.8" viewBox="0 0 13.500 12.700"><circle cx="6" cy="6" r="5.700" fill="#2ca5e0"/><path d="M2.300 6l6.900-2.900-1.100 6.400-2.400-1.800-1.100 1-.2-1.900z" fill="#fff"/><rect x="7.600" y="8" width="5.300" height="3.800" rx=".8" fill="#8d9399"/></svg>
<svg style="left:189.28px;top:482.79999999999995px;" width="9.4" height="8.8" viewBox="0 0 13.500 12.700"><circle cx="6" cy="6" r="5.700" fill="#5865f2"/><path d="M2.800 4.300h6.400l.9 3.700-1.900 1.100H3.800L1.900 8z" fill="#fff"/><circle cx="4.800" cy="6.600" r=".8" fill="#5865f2"/><circle cx="7.200" cy="6.600" r=".8" fill="#5865f2"/><circle cx="10.200" cy="9.700" r="2.700" fill="#ed4245"/><circle cx="10.200" cy="9.700" r="1" fill="#fff"/></svg>
<svg style="left:206.26000000000002px;top:482.79999999999995px;" width="8.2" height="8.2" viewBox="0 0 12 12"><circle cx="6" cy="6" r="5.600" fill="#33485e"/><path d="M6 .4a5.600 5.600 0 0 1 0 11.200z" fill="#0c1218"/><path d="M6 6L2 9.800A5.600 5.600 0 0 0 6 11.600z" fill="#0c1218"/></svg>
<svg style="left:223.34px;top:483.0px;" width="7.8" height="7.8" viewBox="0 0 12 12"><rect x=".5" y=".5" width="11" height="11" rx="1.200" fill="#4a1238"/><rect x="3" y="2" width="7" height="8.500" fill="#f6ecd9"/><rect x="2" y="3" width="1.500" height="7" fill="#e3d6bd"/></svg>
<div style="left:239.8px;top:482.5px;width:8.9px;height:8.3px;background:#ff80c4;"></div>
<svg style="left:256.5px;top:482.79999999999995px;" width="9" height="8.2" viewBox="0 0 12 13.600"><path d="M6 0l6 3-6 3-6-3z" fill="#fdd835"/><path d="M0 4.300l6 3 6-3v1.900l-6 3-6-3z" fill="#4caf50"/><path d="M0 7l6 3 6-3v1.900l-6 3-6-3z" fill="#2196f3"/><path d="M0 9.600l6 3 6-3v.9l-6 3-6-3z" fill="#f4511e"/></svg>
<div style="left:269.4px;top:479.8px;width:16.7px;height:13.199999999999989px;background:#45494d;"></div>
<div style="left:269.4px;top:492px;width:16.7px;height:1px;background:rgba(111,143,170,0.60);"></div>
<div style="left:273.0px;top:483.0px;width:9.6px;height:7.8px;background:#04100a;border-radius:0.5px"></div>
<div style="left:274.9px;top:484.4px;width:5.8px;height:5.0px;background:#0a6a14;border-radius:2px"></div>
<div style="left:276.4px;top:485.5px;width:2.8px;height:2.8px;background:#0c8a1c;border-radius:1.4px"></div>
<svg style="left:800.8px;top:484.4px;" width="5.4" height="4" viewBox="0 0 10 6"><path d="M1 5l4-3.800L9 5" stroke="#fff" stroke-width="1" fill="none"/></svg>
<svg style="left:809.8px;top:483.6px;" width="4.4" height="6.4" viewBox="0 0 8 12"><ellipse cx="4" cy="6" rx="3" ry="5" fill="none" stroke="#e6e6e6" stroke-width="1"/><path d="M4 3v4" stroke="#e6e6e6" stroke-width="1"/></svg>
<svg style="left:817.2px;top:484.3px;" width="6.4" height="5.4" viewBox="0 0 11 10"><rect x="1.500" y="1" width="8.500" height="6" fill="none" stroke="#fff" stroke-width="1"/><path d="M3.500 9h4.500M0 2.500h2.500v3H0z" stroke="#fff" stroke-width="1" fill="#fff"/></svg>
<div class="t s" style="left:826.0px;top:483px;font-size:4.0px;color:#fff;transform:scaleX(0.8998);transform-origin:0 50%;">ENG</div>
<div class="t s" style="left:843.6px;top:480px;font-size:4.0px;color:#fff;transform:scaleX(0.8791);transform-origin:0 50%;">15:34</div>
<div class="t s" style="left:838.8px;top:486px;font-size:4.0px;color:#fff;transform:scaleX(0.9191);transform-origin:0 50%;">25.01.2022</div>
<svg style="left:862.4px;top:483.6px;" width="7.4" height="7" viewBox="0 0 11.500 11"><path d="M.5.5h9v6.500H5L2.500 9V7H.5z" fill="#fff"/><circle cx="8.600" cy="8.200" r="2.500" fill="#22262a" stroke="#fff" stroke-width=".7"/></svg>
<div style="left:874px;top:479.8px;width:1px;height:13.199999999999989px;background:rgba(118,122,126,0.40);"></div>
<div style="left:875px;top:479.8px;width:1px;height:13.199999999999989px;background:rgba(118,122,126,0.10);"></div>
</div></body></html>
